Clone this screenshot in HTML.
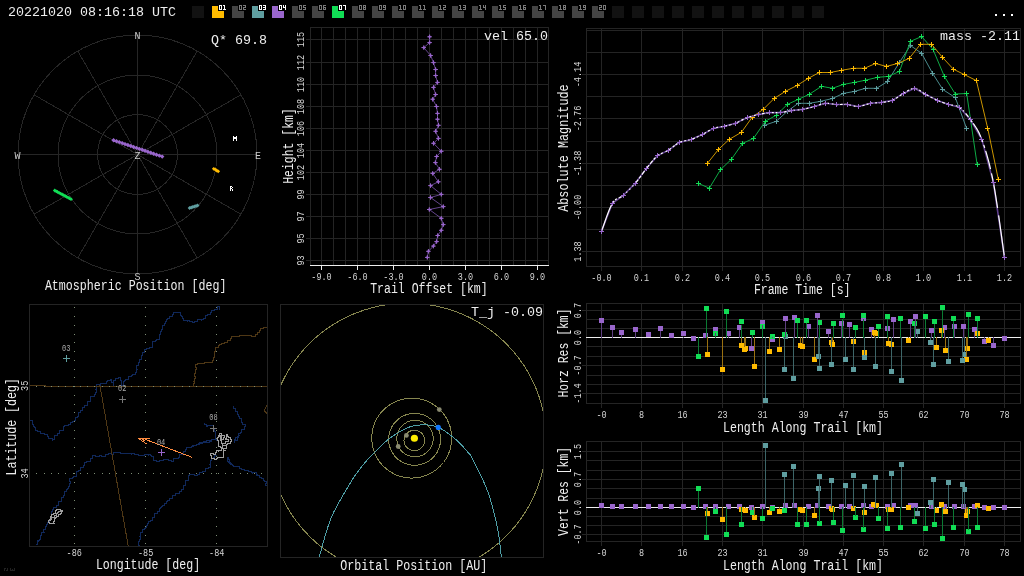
<!DOCTYPE html>
<html><head><meta charset="utf-8"><style>
html,body{margin:0;padding:0;background:#000;width:1024px;height:576px;overflow:hidden}
svg{display:block}
text{font-family:"Liberation Mono", monospace;}
</style></head><body>
<div style="will-change:transform;width:1024px;height:576px"><svg width="1024" height="576" viewBox="0 0 1024 576">
<rect width="1024" height="576" fill="#000"/>
<text x="8" y="15.5" font-size="13.33" fill="#eeeeee" text-anchor="start" >20221020 08:16:18 UTC</text>
<rect x="192" y="6" width="12" height="12" fill="#121212"/>
<rect x="212" y="6" width="12" height="12" fill="#ffbb00"/>
<rect x="218" y="4" width="9" height="7" fill="#000"/>
<path d="M219,5h1v1h-1zM220,5h1v1h-1zM221,5h1v1h-1zM219,6h1v1h-1zM221,6h1v1h-1zM219,7h1v1h-1zM221,7h1v1h-1zM219,8h1v1h-1zM221,8h1v1h-1zM219,9h1v1h-1zM220,9h1v1h-1zM221,9h1v1h-1zM223,5h1v1h-1zM224,5h1v1h-1zM224,6h1v1h-1zM224,7h1v1h-1zM224,8h1v1h-1zM223,9h1v1h-1zM224,9h1v1h-1zM225,9h1v1h-1z" fill="#fff"/>
<rect x="232" y="6" width="12" height="12" fill="#444"/>
<rect x="238" y="4" width="9" height="7" fill="#000"/>
<path d="M239,5h1v1h-1zM240,5h1v1h-1zM241,5h1v1h-1zM239,6h1v1h-1zM241,6h1v1h-1zM239,7h1v1h-1zM241,7h1v1h-1zM239,8h1v1h-1zM241,8h1v1h-1zM239,9h1v1h-1zM240,9h1v1h-1zM241,9h1v1h-1zM243,5h1v1h-1zM244,5h1v1h-1zM245,5h1v1h-1zM245,6h1v1h-1zM243,7h1v1h-1zM244,7h1v1h-1zM245,7h1v1h-1zM243,8h1v1h-1zM243,9h1v1h-1zM244,9h1v1h-1zM245,9h1v1h-1z" fill="#7a7a7a"/>
<rect x="252" y="6" width="12" height="12" fill="#5f9ea0"/>
<rect x="258" y="4" width="9" height="7" fill="#000"/>
<path d="M259,5h1v1h-1zM260,5h1v1h-1zM261,5h1v1h-1zM259,6h1v1h-1zM261,6h1v1h-1zM259,7h1v1h-1zM261,7h1v1h-1zM259,8h1v1h-1zM261,8h1v1h-1zM259,9h1v1h-1zM260,9h1v1h-1zM261,9h1v1h-1zM263,5h1v1h-1zM264,5h1v1h-1zM265,5h1v1h-1zM265,6h1v1h-1zM263,7h1v1h-1zM264,7h1v1h-1zM265,7h1v1h-1zM265,8h1v1h-1zM263,9h1v1h-1zM264,9h1v1h-1zM265,9h1v1h-1z" fill="#fff"/>
<rect x="272" y="6" width="12" height="12" fill="#9966cc"/>
<rect x="278" y="4" width="9" height="7" fill="#000"/>
<path d="M279,5h1v1h-1zM280,5h1v1h-1zM281,5h1v1h-1zM279,6h1v1h-1zM281,6h1v1h-1zM279,7h1v1h-1zM281,7h1v1h-1zM279,8h1v1h-1zM281,8h1v1h-1zM279,9h1v1h-1zM280,9h1v1h-1zM281,9h1v1h-1zM283,5h1v1h-1zM285,5h1v1h-1zM283,6h1v1h-1zM285,6h1v1h-1zM283,7h1v1h-1zM284,7h1v1h-1zM285,7h1v1h-1zM285,8h1v1h-1zM285,9h1v1h-1z" fill="#fff"/>
<rect x="292" y="6" width="12" height="12" fill="#444"/>
<rect x="298" y="4" width="9" height="7" fill="#000"/>
<path d="M299,5h1v1h-1zM300,5h1v1h-1zM301,5h1v1h-1zM299,6h1v1h-1zM301,6h1v1h-1zM299,7h1v1h-1zM301,7h1v1h-1zM299,8h1v1h-1zM301,8h1v1h-1zM299,9h1v1h-1zM300,9h1v1h-1zM301,9h1v1h-1zM303,5h1v1h-1zM304,5h1v1h-1zM305,5h1v1h-1zM303,6h1v1h-1zM303,7h1v1h-1zM304,7h1v1h-1zM305,7h1v1h-1zM305,8h1v1h-1zM303,9h1v1h-1zM304,9h1v1h-1zM305,9h1v1h-1z" fill="#7a7a7a"/>
<rect x="312" y="6" width="12" height="12" fill="#444"/>
<rect x="318" y="4" width="9" height="7" fill="#000"/>
<path d="M319,5h1v1h-1zM320,5h1v1h-1zM321,5h1v1h-1zM319,6h1v1h-1zM321,6h1v1h-1zM319,7h1v1h-1zM321,7h1v1h-1zM319,8h1v1h-1zM321,8h1v1h-1zM319,9h1v1h-1zM320,9h1v1h-1zM321,9h1v1h-1zM323,5h1v1h-1zM324,5h1v1h-1zM325,5h1v1h-1zM323,6h1v1h-1zM323,7h1v1h-1zM324,7h1v1h-1zM325,7h1v1h-1zM323,8h1v1h-1zM325,8h1v1h-1zM323,9h1v1h-1zM324,9h1v1h-1zM325,9h1v1h-1z" fill="#7a7a7a"/>
<rect x="332" y="6" width="12" height="12" fill="#11dd55"/>
<rect x="338" y="4" width="9" height="7" fill="#000"/>
<path d="M339,5h1v1h-1zM340,5h1v1h-1zM341,5h1v1h-1zM339,6h1v1h-1zM341,6h1v1h-1zM339,7h1v1h-1zM341,7h1v1h-1zM339,8h1v1h-1zM341,8h1v1h-1zM339,9h1v1h-1zM340,9h1v1h-1zM341,9h1v1h-1zM343,5h1v1h-1zM344,5h1v1h-1zM345,5h1v1h-1zM345,6h1v1h-1zM345,7h1v1h-1zM345,8h1v1h-1zM345,9h1v1h-1z" fill="#fff"/>
<rect x="352" y="6" width="12" height="12" fill="#444"/>
<rect x="358" y="4" width="9" height="7" fill="#000"/>
<path d="M359,5h1v1h-1zM360,5h1v1h-1zM361,5h1v1h-1zM359,6h1v1h-1zM361,6h1v1h-1zM359,7h1v1h-1zM361,7h1v1h-1zM359,8h1v1h-1zM361,8h1v1h-1zM359,9h1v1h-1zM360,9h1v1h-1zM361,9h1v1h-1zM363,5h1v1h-1zM364,5h1v1h-1zM365,5h1v1h-1zM363,6h1v1h-1zM365,6h1v1h-1zM363,7h1v1h-1zM364,7h1v1h-1zM365,7h1v1h-1zM363,8h1v1h-1zM365,8h1v1h-1zM363,9h1v1h-1zM364,9h1v1h-1zM365,9h1v1h-1z" fill="#7a7a7a"/>
<rect x="372" y="6" width="12" height="12" fill="#444"/>
<rect x="378" y="4" width="9" height="7" fill="#000"/>
<path d="M379,5h1v1h-1zM380,5h1v1h-1zM381,5h1v1h-1zM379,6h1v1h-1zM381,6h1v1h-1zM379,7h1v1h-1zM381,7h1v1h-1zM379,8h1v1h-1zM381,8h1v1h-1zM379,9h1v1h-1zM380,9h1v1h-1zM381,9h1v1h-1zM383,5h1v1h-1zM384,5h1v1h-1zM385,5h1v1h-1zM383,6h1v1h-1zM385,6h1v1h-1zM383,7h1v1h-1zM384,7h1v1h-1zM385,7h1v1h-1zM385,8h1v1h-1zM383,9h1v1h-1zM384,9h1v1h-1zM385,9h1v1h-1z" fill="#7a7a7a"/>
<rect x="392" y="6" width="12" height="12" fill="#444"/>
<rect x="398" y="4" width="9" height="7" fill="#000"/>
<path d="M399,5h1v1h-1zM400,5h1v1h-1zM400,6h1v1h-1zM400,7h1v1h-1zM400,8h1v1h-1zM399,9h1v1h-1zM400,9h1v1h-1zM401,9h1v1h-1zM403,5h1v1h-1zM404,5h1v1h-1zM405,5h1v1h-1zM403,6h1v1h-1zM405,6h1v1h-1zM403,7h1v1h-1zM405,7h1v1h-1zM403,8h1v1h-1zM405,8h1v1h-1zM403,9h1v1h-1zM404,9h1v1h-1zM405,9h1v1h-1z" fill="#7a7a7a"/>
<rect x="412" y="6" width="12" height="12" fill="#444"/>
<rect x="418" y="4" width="9" height="7" fill="#000"/>
<path d="M419,5h1v1h-1zM420,5h1v1h-1zM420,6h1v1h-1zM420,7h1v1h-1zM420,8h1v1h-1zM419,9h1v1h-1zM420,9h1v1h-1zM421,9h1v1h-1zM423,5h1v1h-1zM424,5h1v1h-1zM424,6h1v1h-1zM424,7h1v1h-1zM424,8h1v1h-1zM423,9h1v1h-1zM424,9h1v1h-1zM425,9h1v1h-1z" fill="#7a7a7a"/>
<rect x="432" y="6" width="12" height="12" fill="#444"/>
<rect x="438" y="4" width="9" height="7" fill="#000"/>
<path d="M439,5h1v1h-1zM440,5h1v1h-1zM440,6h1v1h-1zM440,7h1v1h-1zM440,8h1v1h-1zM439,9h1v1h-1zM440,9h1v1h-1zM441,9h1v1h-1zM443,5h1v1h-1zM444,5h1v1h-1zM445,5h1v1h-1zM445,6h1v1h-1zM443,7h1v1h-1zM444,7h1v1h-1zM445,7h1v1h-1zM443,8h1v1h-1zM443,9h1v1h-1zM444,9h1v1h-1zM445,9h1v1h-1z" fill="#7a7a7a"/>
<rect x="452" y="6" width="12" height="12" fill="#444"/>
<rect x="458" y="4" width="9" height="7" fill="#000"/>
<path d="M459,5h1v1h-1zM460,5h1v1h-1zM460,6h1v1h-1zM460,7h1v1h-1zM460,8h1v1h-1zM459,9h1v1h-1zM460,9h1v1h-1zM461,9h1v1h-1zM463,5h1v1h-1zM464,5h1v1h-1zM465,5h1v1h-1zM465,6h1v1h-1zM463,7h1v1h-1zM464,7h1v1h-1zM465,7h1v1h-1zM465,8h1v1h-1zM463,9h1v1h-1zM464,9h1v1h-1zM465,9h1v1h-1z" fill="#7a7a7a"/>
<rect x="472" y="6" width="12" height="12" fill="#444"/>
<rect x="478" y="4" width="9" height="7" fill="#000"/>
<path d="M479,5h1v1h-1zM480,5h1v1h-1zM480,6h1v1h-1zM480,7h1v1h-1zM480,8h1v1h-1zM479,9h1v1h-1zM480,9h1v1h-1zM481,9h1v1h-1zM483,5h1v1h-1zM485,5h1v1h-1zM483,6h1v1h-1zM485,6h1v1h-1zM483,7h1v1h-1zM484,7h1v1h-1zM485,7h1v1h-1zM485,8h1v1h-1zM485,9h1v1h-1z" fill="#7a7a7a"/>
<rect x="492" y="6" width="12" height="12" fill="#444"/>
<rect x="498" y="4" width="9" height="7" fill="#000"/>
<path d="M499,5h1v1h-1zM500,5h1v1h-1zM500,6h1v1h-1zM500,7h1v1h-1zM500,8h1v1h-1zM499,9h1v1h-1zM500,9h1v1h-1zM501,9h1v1h-1zM503,5h1v1h-1zM504,5h1v1h-1zM505,5h1v1h-1zM503,6h1v1h-1zM503,7h1v1h-1zM504,7h1v1h-1zM505,7h1v1h-1zM505,8h1v1h-1zM503,9h1v1h-1zM504,9h1v1h-1zM505,9h1v1h-1z" fill="#7a7a7a"/>
<rect x="512" y="6" width="12" height="12" fill="#444"/>
<rect x="518" y="4" width="9" height="7" fill="#000"/>
<path d="M519,5h1v1h-1zM520,5h1v1h-1zM520,6h1v1h-1zM520,7h1v1h-1zM520,8h1v1h-1zM519,9h1v1h-1zM520,9h1v1h-1zM521,9h1v1h-1zM523,5h1v1h-1zM524,5h1v1h-1zM525,5h1v1h-1zM523,6h1v1h-1zM523,7h1v1h-1zM524,7h1v1h-1zM525,7h1v1h-1zM523,8h1v1h-1zM525,8h1v1h-1zM523,9h1v1h-1zM524,9h1v1h-1zM525,9h1v1h-1z" fill="#7a7a7a"/>
<rect x="532" y="6" width="12" height="12" fill="#444"/>
<rect x="538" y="4" width="9" height="7" fill="#000"/>
<path d="M539,5h1v1h-1zM540,5h1v1h-1zM540,6h1v1h-1zM540,7h1v1h-1zM540,8h1v1h-1zM539,9h1v1h-1zM540,9h1v1h-1zM541,9h1v1h-1zM543,5h1v1h-1zM544,5h1v1h-1zM545,5h1v1h-1zM545,6h1v1h-1zM545,7h1v1h-1zM545,8h1v1h-1zM545,9h1v1h-1z" fill="#7a7a7a"/>
<rect x="552" y="6" width="12" height="12" fill="#444"/>
<rect x="558" y="4" width="9" height="7" fill="#000"/>
<path d="M559,5h1v1h-1zM560,5h1v1h-1zM560,6h1v1h-1zM560,7h1v1h-1zM560,8h1v1h-1zM559,9h1v1h-1zM560,9h1v1h-1zM561,9h1v1h-1zM563,5h1v1h-1zM564,5h1v1h-1zM565,5h1v1h-1zM563,6h1v1h-1zM565,6h1v1h-1zM563,7h1v1h-1zM564,7h1v1h-1zM565,7h1v1h-1zM563,8h1v1h-1zM565,8h1v1h-1zM563,9h1v1h-1zM564,9h1v1h-1zM565,9h1v1h-1z" fill="#7a7a7a"/>
<rect x="572" y="6" width="12" height="12" fill="#444"/>
<rect x="578" y="4" width="9" height="7" fill="#000"/>
<path d="M579,5h1v1h-1zM580,5h1v1h-1zM580,6h1v1h-1zM580,7h1v1h-1zM580,8h1v1h-1zM579,9h1v1h-1zM580,9h1v1h-1zM581,9h1v1h-1zM583,5h1v1h-1zM584,5h1v1h-1zM585,5h1v1h-1zM583,6h1v1h-1zM585,6h1v1h-1zM583,7h1v1h-1zM584,7h1v1h-1zM585,7h1v1h-1zM585,8h1v1h-1zM583,9h1v1h-1zM584,9h1v1h-1zM585,9h1v1h-1z" fill="#7a7a7a"/>
<rect x="592" y="6" width="12" height="12" fill="#444"/>
<rect x="598" y="4" width="9" height="7" fill="#000"/>
<path d="M599,5h1v1h-1zM600,5h1v1h-1zM601,5h1v1h-1zM601,6h1v1h-1zM599,7h1v1h-1zM600,7h1v1h-1zM601,7h1v1h-1zM599,8h1v1h-1zM599,9h1v1h-1zM600,9h1v1h-1zM601,9h1v1h-1zM603,5h1v1h-1zM604,5h1v1h-1zM605,5h1v1h-1zM603,6h1v1h-1zM605,6h1v1h-1zM603,7h1v1h-1zM605,7h1v1h-1zM603,8h1v1h-1zM605,8h1v1h-1zM603,9h1v1h-1zM604,9h1v1h-1zM605,9h1v1h-1z" fill="#7a7a7a"/>
<rect x="612" y="6" width="12" height="12" fill="#121212"/>
<rect x="632" y="6" width="12" height="12" fill="#121212"/>
<rect x="652" y="6" width="12" height="12" fill="#121212"/>
<rect x="672" y="6" width="12" height="12" fill="#121212"/>
<rect x="692" y="6" width="12" height="12" fill="#121212"/>
<rect x="712" y="6" width="12" height="12" fill="#121212"/>
<rect x="732" y="6" width="12" height="12" fill="#121212"/>
<rect x="752" y="6" width="12" height="12" fill="#121212"/>
<rect x="772" y="6" width="12" height="12" fill="#121212"/>
<rect x="792" y="6" width="12" height="12" fill="#121212"/>
<rect x="812" y="6" width="12" height="12" fill="#121212"/>
<path d="M4,568h2v1h-1v2h-1zM7,568h1v3h-2v-1h1zM10,568h1v2h1v-1h1v1h1v-2h1v3h-5z" fill="#222"/>
<rect x="995" y="14" width="2" height="2" fill="#fff"/>
<rect x="1003" y="14" width="2" height="2" fill="#fff"/>
<rect x="1011" y="14" width="2" height="2" fill="#fff"/>
<circle cx="137.5" cy="154.5" r="40" fill="none" stroke="#262626" stroke-width="1" shape-rendering="crispEdges"/>
<circle cx="137.5" cy="154.5" r="79.5" fill="none" stroke="#262626" stroke-width="1" shape-rendering="crispEdges"/>
<circle cx="137.5" cy="154.5" r="119.5" fill="none" stroke="#262626" stroke-width="1" shape-rendering="crispEdges"/>
<line x1="137.5" y1="154.5" x2="257.0" y2="154.5" stroke="#262626" stroke-width="1" shape-rendering="crispEdges"/>
<line x1="137.5" y1="154.5" x2="240.99003575224043" y2="214.25" stroke="#262626" stroke-width="1" shape-rendering="crispEdges"/>
<line x1="137.5" y1="154.5" x2="197.25" y2="257.99003575224043" stroke="#262626" stroke-width="1" shape-rendering="crispEdges"/>
<line x1="137.5" y1="154.5" x2="137.5" y2="274.0" stroke="#262626" stroke-width="1" shape-rendering="crispEdges"/>
<line x1="137.5" y1="154.5" x2="77.75000000000003" y2="257.99003575224043" stroke="#262626" stroke-width="1" shape-rendering="crispEdges"/>
<line x1="137.5" y1="154.5" x2="34.00996424775957" y2="214.25" stroke="#262626" stroke-width="1" shape-rendering="crispEdges"/>
<line x1="137.5" y1="154.5" x2="18.0" y2="154.50000000000003" stroke="#262626" stroke-width="1" shape-rendering="crispEdges"/>
<line x1="137.5" y1="154.5" x2="34.009964247759584" y2="94.74999999999999" stroke="#262626" stroke-width="1" shape-rendering="crispEdges"/>
<line x1="137.5" y1="154.5" x2="77.74999999999994" y2="51.00996424775961" stroke="#262626" stroke-width="1" shape-rendering="crispEdges"/>
<line x1="137.5" y1="154.5" x2="137.49999999999997" y2="35.0" stroke="#262626" stroke-width="1" shape-rendering="crispEdges"/>
<line x1="137.5" y1="154.5" x2="197.25" y2="51.009964247759584" stroke="#262626" stroke-width="1" shape-rendering="crispEdges"/>
<line x1="137.5" y1="154.5" x2="240.99003575224037" y2="94.74999999999994" stroke="#262626" stroke-width="1" shape-rendering="crispEdges"/>
<text x="137.5" y="39" font-size="10" fill="#cccccc" text-anchor="middle" >N</text>
<text x="137.5" y="279.5" font-size="10" fill="#cccccc" text-anchor="middle" >S</text>
<text x="17.5" y="159" font-size="10" fill="#cccccc" text-anchor="middle" >W</text>
<text x="258" y="159" font-size="10" fill="#cccccc" text-anchor="middle" >E</text>
<text x="137.5" y="159" font-size="10" fill="#cccccc" text-anchor="middle" >Z</text>
<path d="M233,136h1v1h-1zM236,136h1v1h-1zM233,137h1v1h-1zM234,137h1v1h-1zM235,137h1v1h-1zM236,137h1v1h-1zM233,138h1v1h-1zM234,138h1v1h-1zM235,138h1v1h-1zM236,138h1v1h-1zM233,139h1v1h-1zM236,139h1v1h-1zM233,140h1v1h-1zM236,140h1v1h-1z" fill="#ffffff"/>
<path d="M230,186h1v1h-1zM231,186h1v1h-1zM230,187h1v1h-1zM232,187h1v1h-1zM230,188h1v1h-1zM231,188h1v1h-1zM230,189h1v1h-1zM232,189h1v1h-1zM230,190h1v1h-1zM232,190h1v1h-1z" fill="#ffffff"/>
<text x="267" y="44" font-size="13.33" fill="#eeeeee" text-anchor="end" >Q* 69.8</text>
<text x="135.65" y="290.1" font-size="14" fill="#eeeeee" text-anchor="middle" textLength="181.5" lengthAdjust="spacingAndGlyphs" >Atmospheric Position [deg]</text>
<path d="M113.6,138.0l2.2,2.2l-2.2,2.2l-2.2,-2.2zM116.5,139.0l2.2,2.2l-2.2,2.2l-2.2,-2.2zM119.3,139.9l2.2,2.2l-2.2,2.2l-2.2,-2.2zM122.2,140.9l2.2,2.2l-2.2,2.2l-2.2,-2.2zM125.0,141.9l2.2,2.2l-2.2,2.2l-2.2,-2.2zM127.9,142.8l2.2,2.2l-2.2,2.2l-2.2,-2.2zM130.8,143.8l2.2,2.2l-2.2,2.2l-2.2,-2.2zM133.6,144.8l2.2,2.2l-2.2,2.2l-2.2,-2.2zM136.5,145.7l2.2,2.2l-2.2,2.2l-2.2,-2.2zM139.3,146.7l2.2,2.2l-2.2,2.2l-2.2,-2.2zM142.2,147.6l2.2,2.2l-2.2,2.2l-2.2,-2.2zM145.0,148.6l2.2,2.2l-2.2,2.2l-2.2,-2.2zM147.9,149.6l2.2,2.2l-2.2,2.2l-2.2,-2.2zM150.8,150.5l2.2,2.2l-2.2,2.2l-2.2,-2.2zM153.6,151.5l2.2,2.2l-2.2,2.2l-2.2,-2.2zM156.5,152.5l2.2,2.2l-2.2,2.2l-2.2,-2.2zM159.3,153.4l2.2,2.2l-2.2,2.2l-2.2,-2.2zM162.2,154.4l2.2,2.2l-2.2,2.2l-2.2,-2.2z" fill="#9966cc"/>
<path d="M54.8,188.6l1.9,1.9l-1.9,1.9l-1.9,-1.9zM56.3,189.4l1.9,1.9l-1.9,1.9l-1.9,-1.9zM57.7,190.2l1.9,1.9l-1.9,1.9l-1.9,-1.9zM59.2,191.0l1.9,1.9l-1.9,1.9l-1.9,-1.9zM60.7,191.8l1.9,1.9l-1.9,1.9l-1.9,-1.9zM62.2,192.6l1.9,1.9l-1.9,1.9l-1.9,-1.9zM63.6,193.3l1.9,1.9l-1.9,1.9l-1.9,-1.9zM65.1,194.1l1.9,1.9l-1.9,1.9l-1.9,-1.9zM66.6,194.9l1.9,1.9l-1.9,1.9l-1.9,-1.9zM68.1,195.7l1.9,1.9l-1.9,1.9l-1.9,-1.9zM69.5,196.5l1.9,1.9l-1.9,1.9l-1.9,-1.9zM71.0,197.3l1.9,1.9l-1.9,1.9l-1.9,-1.9z" fill="#11dd55"/>
<path d="M213.8,166.9l1.9,1.9l-1.9,1.9l-1.9,-1.9zM215.3,167.7l1.9,1.9l-1.9,1.9l-1.9,-1.9zM216.7,168.6l1.9,1.9l-1.9,1.9l-1.9,-1.9zM218.2,169.4l1.9,1.9l-1.9,1.9l-1.9,-1.9z" fill="#ffbb00"/>
<path d="M189.6,206.1l1.9,1.9l-1.9,1.9l-1.9,-1.9zM191.2,205.6l1.9,1.9l-1.9,1.9l-1.9,-1.9zM192.8,205.1l1.9,1.9l-1.9,1.9l-1.9,-1.9zM194.4,204.6l1.9,1.9l-1.9,1.9l-1.9,-1.9zM196.0,204.1l1.9,1.9l-1.9,1.9l-1.9,-1.9zM197.6,203.6l1.9,1.9l-1.9,1.9l-1.9,-1.9z" fill="#5f9ea0"/>
<rect x="321" y="27" width="1" height="238" fill="#242424"/>
<rect x="333" y="27" width="1" height="238" fill="#242424"/>
<rect x="345" y="27" width="1" height="238" fill="#242424"/>
<rect x="357" y="27" width="1" height="238" fill="#242424"/>
<rect x="369" y="27" width="1" height="238" fill="#242424"/>
<rect x="381" y="27" width="1" height="238" fill="#242424"/>
<rect x="393" y="27" width="1" height="238" fill="#242424"/>
<rect x="405" y="27" width="1" height="238" fill="#242424"/>
<rect x="417" y="27" width="1" height="238" fill="#242424"/>
<rect x="429" y="27" width="1" height="238" fill="#242424"/>
<rect x="441" y="27" width="1" height="238" fill="#242424"/>
<rect x="453" y="27" width="1" height="238" fill="#242424"/>
<rect x="465" y="27" width="1" height="238" fill="#242424"/>
<rect x="477" y="27" width="1" height="238" fill="#242424"/>
<rect x="489" y="27" width="1" height="238" fill="#242424"/>
<rect x="501" y="27" width="1" height="238" fill="#242424"/>
<rect x="513" y="27" width="1" height="238" fill="#242424"/>
<rect x="525" y="27" width="1" height="238" fill="#242424"/>
<rect x="537" y="27" width="1" height="238" fill="#242424"/>
<rect x="306" y="39" width="243" height="1" fill="#242424"/>
<rect x="306" y="62" width="243" height="1" fill="#242424"/>
<rect x="306" y="84" width="243" height="1" fill="#242424"/>
<rect x="306" y="106" width="243" height="1" fill="#242424"/>
<rect x="306" y="128" width="243" height="1" fill="#242424"/>
<rect x="306" y="150" width="243" height="1" fill="#242424"/>
<rect x="306" y="172" width="243" height="1" fill="#242424"/>
<rect x="306" y="194" width="243" height="1" fill="#242424"/>
<rect x="306" y="216" width="243" height="1" fill="#242424"/>
<rect x="306" y="238" width="243" height="1" fill="#242424"/>
<rect x="306" y="260" width="243" height="1" fill="#242424"/>
<rect x="310" y="27" width="239" height="1" fill="#242424"/>
<rect x="310" y="265" width="239" height="1" fill="#242424"/>
<rect x="310" y="27" width="1" height="239" fill="#242424"/>
<rect x="548" y="27" width="1" height="239" fill="#242424"/>
<rect x="310" y="265" width="239" height="1" fill="#eeeeee"/>
<rect x="321" y="266" width="1" height="4" fill="#eeeeee"/>
<text x="321.5" y="280" font-size="10.5" fill="#d4d4d4" text-anchor="middle" textLength="20.4" lengthAdjust="spacingAndGlyphs" >-9.0</text>
<rect x="357" y="266" width="1" height="4" fill="#eeeeee"/>
<text x="357.5" y="280" font-size="10.5" fill="#d4d4d4" text-anchor="middle" textLength="20.4" lengthAdjust="spacingAndGlyphs" >-6.0</text>
<rect x="393" y="266" width="1" height="4" fill="#eeeeee"/>
<text x="393.5" y="280" font-size="10.5" fill="#d4d4d4" text-anchor="middle" textLength="20.4" lengthAdjust="spacingAndGlyphs" >-3.0</text>
<rect x="429" y="266" width="1" height="4" fill="#eeeeee"/>
<text x="429.5" y="280" font-size="10.5" fill="#d4d4d4" text-anchor="middle" textLength="15.299999999999999" lengthAdjust="spacingAndGlyphs" >0.0</text>
<rect x="465" y="266" width="1" height="4" fill="#eeeeee"/>
<text x="465.5" y="280" font-size="10.5" fill="#d4d4d4" text-anchor="middle" textLength="15.299999999999999" lengthAdjust="spacingAndGlyphs" >3.0</text>
<rect x="501" y="266" width="1" height="4" fill="#eeeeee"/>
<text x="501.5" y="280" font-size="10.5" fill="#d4d4d4" text-anchor="middle" textLength="15.299999999999999" lengthAdjust="spacingAndGlyphs" >6.0</text>
<rect x="537" y="266" width="1" height="4" fill="#eeeeee"/>
<text x="537.5" y="280" font-size="10.5" fill="#d4d4d4" text-anchor="middle" textLength="15.299999999999999" lengthAdjust="spacingAndGlyphs" >9.0</text>
<text x="0" y="0" font-size="10.5" fill="#d4d4d4" text-anchor="middle" transform="translate(304.2,39.5) rotate(-90)" textLength="15.299999999999999" lengthAdjust="spacingAndGlyphs" >115</text>
<text x="0" y="0" font-size="10.5" fill="#d4d4d4" text-anchor="middle" transform="translate(304.2,62.5) rotate(-90)" textLength="15.299999999999999" lengthAdjust="spacingAndGlyphs" >112</text>
<text x="0" y="0" font-size="10.5" fill="#d4d4d4" text-anchor="middle" transform="translate(304.2,84.5) rotate(-90)" textLength="15.299999999999999" lengthAdjust="spacingAndGlyphs" >110</text>
<text x="0" y="0" font-size="10.5" fill="#d4d4d4" text-anchor="middle" transform="translate(304.2,106.5) rotate(-90)" textLength="15.299999999999999" lengthAdjust="spacingAndGlyphs" >108</text>
<text x="0" y="0" font-size="10.5" fill="#d4d4d4" text-anchor="middle" transform="translate(304.2,128.5) rotate(-90)" textLength="15.299999999999999" lengthAdjust="spacingAndGlyphs" >106</text>
<text x="0" y="0" font-size="10.5" fill="#d4d4d4" text-anchor="middle" transform="translate(304.2,150.5) rotate(-90)" textLength="15.299999999999999" lengthAdjust="spacingAndGlyphs" >104</text>
<text x="0" y="0" font-size="10.5" fill="#d4d4d4" text-anchor="middle" transform="translate(304.2,172.5) rotate(-90)" textLength="15.299999999999999" lengthAdjust="spacingAndGlyphs" >102</text>
<text x="0" y="0" font-size="10.5" fill="#d4d4d4" text-anchor="middle" transform="translate(304.2,194.5) rotate(-90)" textLength="10.2" lengthAdjust="spacingAndGlyphs" >99</text>
<text x="0" y="0" font-size="10.5" fill="#d4d4d4" text-anchor="middle" transform="translate(304.2,216.5) rotate(-90)" textLength="10.2" lengthAdjust="spacingAndGlyphs" >97</text>
<text x="0" y="0" font-size="10.5" fill="#d4d4d4" text-anchor="middle" transform="translate(304.2,238.5) rotate(-90)" textLength="10.2" lengthAdjust="spacingAndGlyphs" >95</text>
<text x="0" y="0" font-size="10.5" fill="#d4d4d4" text-anchor="middle" transform="translate(304.2,260.5) rotate(-90)" textLength="10.2" lengthAdjust="spacingAndGlyphs" >93</text>
<text x="428.95" y="293" font-size="14" fill="#eeeeee" text-anchor="middle" textLength="117.5" lengthAdjust="spacingAndGlyphs" >Trail Offset [km]</text>
<text x="0" y="0" font-size="14" fill="#eeeeee" text-anchor="middle" transform="translate(293.3,146) rotate(-90)" textLength="75.6" lengthAdjust="spacingAndGlyphs" >Height [km]</text>
<text x="548" y="39.6" font-size="13.33" fill="#eeeeee" text-anchor="end" >vel 65.0</text>
<polyline points="429.6,36.8 429.6,42.6 423.8,47.6 430.6,55.5 433.5,62.6 435.6,69.5 435.6,75.5 437.5,82.4 433.5,87.4 435.6,94.5 432.7,99.2 436.5,106.5 437.5,113.4 437.5,119.2 438.5,125.3 435.6,131.3 438.5,138.4 433.5,143.3 441.3,151.3 436.6,156.5 435.4,162.6 439.5,169.3 432.7,173.4 438.4,181.8 430.5,185.6 441.3,194.4 430.5,197.5 443.3,206.6 429.3,209.5 441.3,218.3 443.3,224.6 441.3,230.3 437.7,235.5 436.6,241.6 433.4,246.1 428.4,251.3 427.3,257.4" fill="none" stroke="#6e4c9a" stroke-width="0.9" stroke-linejoin="round" />
<path d="M427.3,36.8h4.6M429.6,34.5v4.6" stroke="#9966cc" stroke-width="1"/>
<path d="M429.6,35.1l1.6,1.6l-1.6,1.6l-1.6,-1.6z" fill="#9966cc"/>
<path d="M427.3,42.6h4.6M429.6,40.3v4.6" stroke="#9966cc" stroke-width="1"/>
<path d="M429.6,41.0l1.6,1.6l-1.6,1.6l-1.6,-1.6z" fill="#9966cc"/>
<path d="M421.4,47.6h4.6M423.8,45.3v4.6" stroke="#9966cc" stroke-width="1"/>
<path d="M423.8,46.0l1.6,1.6l-1.6,1.6l-1.6,-1.6z" fill="#9966cc"/>
<path d="M428.3,55.5h4.6M430.6,53.2v4.6" stroke="#9966cc" stroke-width="1"/>
<path d="M430.6,53.9l1.6,1.6l-1.6,1.6l-1.6,-1.6z" fill="#9966cc"/>
<path d="M431.2,62.6h4.6M433.5,60.3v4.6" stroke="#9966cc" stroke-width="1"/>
<path d="M433.5,61.0l1.6,1.6l-1.6,1.6l-1.6,-1.6z" fill="#9966cc"/>
<path d="M433.3,69.5h4.6M435.6,67.2v4.6" stroke="#9966cc" stroke-width="1"/>
<path d="M435.6,67.9l1.6,1.6l-1.6,1.6l-1.6,-1.6z" fill="#9966cc"/>
<path d="M433.3,75.5h4.6M435.6,73.2v4.6" stroke="#9966cc" stroke-width="1"/>
<path d="M435.6,73.9l1.6,1.6l-1.6,1.6l-1.6,-1.6z" fill="#9966cc"/>
<path d="M435.2,82.4h4.6M437.5,80.1v4.6" stroke="#9966cc" stroke-width="1"/>
<path d="M437.5,80.8l1.6,1.6l-1.6,1.6l-1.6,-1.6z" fill="#9966cc"/>
<path d="M431.2,87.4h4.6M433.5,85.1v4.6" stroke="#9966cc" stroke-width="1"/>
<path d="M433.5,85.8l1.6,1.6l-1.6,1.6l-1.6,-1.6z" fill="#9966cc"/>
<path d="M433.3,94.5h4.6M435.6,92.2v4.6" stroke="#9966cc" stroke-width="1"/>
<path d="M435.6,92.9l1.6,1.6l-1.6,1.6l-1.6,-1.6z" fill="#9966cc"/>
<path d="M430.4,99.2h4.6M432.7,97.0v4.6" stroke="#9966cc" stroke-width="1"/>
<path d="M432.7,97.7l1.6,1.6l-1.6,1.6l-1.6,-1.6z" fill="#9966cc"/>
<path d="M434.2,106.5h4.6M436.5,104.2v4.6" stroke="#9966cc" stroke-width="1"/>
<path d="M436.5,104.9l1.6,1.6l-1.6,1.6l-1.6,-1.6z" fill="#9966cc"/>
<path d="M435.2,113.4h4.6M437.5,111.1v4.6" stroke="#9966cc" stroke-width="1"/>
<path d="M437.5,111.8l1.6,1.6l-1.6,1.6l-1.6,-1.6z" fill="#9966cc"/>
<path d="M435.2,119.2h4.6M437.5,117.0v4.6" stroke="#9966cc" stroke-width="1"/>
<path d="M437.5,117.7l1.6,1.6l-1.6,1.6l-1.6,-1.6z" fill="#9966cc"/>
<path d="M436.2,125.3h4.6M438.5,123.0v4.6" stroke="#9966cc" stroke-width="1"/>
<path d="M438.5,123.7l1.6,1.6l-1.6,1.6l-1.6,-1.6z" fill="#9966cc"/>
<path d="M433.3,131.3h4.6M435.6,129.0v4.6" stroke="#9966cc" stroke-width="1"/>
<path d="M435.6,129.7l1.6,1.6l-1.6,1.6l-1.6,-1.6z" fill="#9966cc"/>
<path d="M436.2,138.4h4.6M438.5,136.1v4.6" stroke="#9966cc" stroke-width="1"/>
<path d="M438.5,136.8l1.6,1.6l-1.6,1.6l-1.6,-1.6z" fill="#9966cc"/>
<path d="M431.2,143.3h4.6M433.5,141.0v4.6" stroke="#9966cc" stroke-width="1"/>
<path d="M433.5,141.7l1.6,1.6l-1.6,1.6l-1.6,-1.6z" fill="#9966cc"/>
<path d="M439.0,151.3h4.6M441.3,149.0v4.6" stroke="#9966cc" stroke-width="1"/>
<path d="M441.3,149.7l1.6,1.6l-1.6,1.6l-1.6,-1.6z" fill="#9966cc"/>
<path d="M434.3,156.5h4.6M436.6,154.2v4.6" stroke="#9966cc" stroke-width="1"/>
<path d="M436.6,154.9l1.6,1.6l-1.6,1.6l-1.6,-1.6z" fill="#9966cc"/>
<path d="M433.1,162.6h4.6M435.4,160.3v4.6" stroke="#9966cc" stroke-width="1"/>
<path d="M435.4,161.0l1.6,1.6l-1.6,1.6l-1.6,-1.6z" fill="#9966cc"/>
<path d="M437.2,169.3h4.6M439.5,167.0v4.6" stroke="#9966cc" stroke-width="1"/>
<path d="M439.5,167.7l1.6,1.6l-1.6,1.6l-1.6,-1.6z" fill="#9966cc"/>
<path d="M430.4,173.4h4.6M432.7,171.1v4.6" stroke="#9966cc" stroke-width="1"/>
<path d="M432.7,171.8l1.6,1.6l-1.6,1.6l-1.6,-1.6z" fill="#9966cc"/>
<path d="M436.1,181.8h4.6M438.4,179.4v4.6" stroke="#9966cc" stroke-width="1"/>
<path d="M438.4,180.2l1.6,1.6l-1.6,1.6l-1.6,-1.6z" fill="#9966cc"/>
<path d="M428.2,185.6h4.6M430.5,183.3v4.6" stroke="#9966cc" stroke-width="1"/>
<path d="M430.5,184.0l1.6,1.6l-1.6,1.6l-1.6,-1.6z" fill="#9966cc"/>
<path d="M439.0,194.4h4.6M441.3,192.1v4.6" stroke="#9966cc" stroke-width="1"/>
<path d="M441.3,192.8l1.6,1.6l-1.6,1.6l-1.6,-1.6z" fill="#9966cc"/>
<path d="M428.2,197.5h4.6M430.5,195.2v4.6" stroke="#9966cc" stroke-width="1"/>
<path d="M430.5,195.9l1.6,1.6l-1.6,1.6l-1.6,-1.6z" fill="#9966cc"/>
<path d="M441.0,206.6h4.6M443.3,204.3v4.6" stroke="#9966cc" stroke-width="1"/>
<path d="M443.3,205.0l1.6,1.6l-1.6,1.6l-1.6,-1.6z" fill="#9966cc"/>
<path d="M427.0,209.5h4.6M429.3,207.2v4.6" stroke="#9966cc" stroke-width="1"/>
<path d="M429.3,207.9l1.6,1.6l-1.6,1.6l-1.6,-1.6z" fill="#9966cc"/>
<path d="M439.0,218.3h4.6M441.3,216.0v4.6" stroke="#9966cc" stroke-width="1"/>
<path d="M441.3,216.7l1.6,1.6l-1.6,1.6l-1.6,-1.6z" fill="#9966cc"/>
<path d="M441.0,224.6h4.6M443.3,222.3v4.6" stroke="#9966cc" stroke-width="1"/>
<path d="M443.3,223.0l1.6,1.6l-1.6,1.6l-1.6,-1.6z" fill="#9966cc"/>
<path d="M439.0,230.3h4.6M441.3,228.0v4.6" stroke="#9966cc" stroke-width="1"/>
<path d="M441.3,228.7l1.6,1.6l-1.6,1.6l-1.6,-1.6z" fill="#9966cc"/>
<path d="M435.4,235.5h4.6M437.7,233.2v4.6" stroke="#9966cc" stroke-width="1"/>
<path d="M437.7,233.9l1.6,1.6l-1.6,1.6l-1.6,-1.6z" fill="#9966cc"/>
<path d="M434.3,241.6h4.6M436.6,239.3v4.6" stroke="#9966cc" stroke-width="1"/>
<path d="M436.6,240.0l1.6,1.6l-1.6,1.6l-1.6,-1.6z" fill="#9966cc"/>
<path d="M431.1,246.1h4.6M433.4,243.8v4.6" stroke="#9966cc" stroke-width="1"/>
<path d="M433.4,244.5l1.6,1.6l-1.6,1.6l-1.6,-1.6z" fill="#9966cc"/>
<path d="M426.1,251.3h4.6M428.4,249.0v4.6" stroke="#9966cc" stroke-width="1"/>
<path d="M428.4,249.7l1.6,1.6l-1.6,1.6l-1.6,-1.6z" fill="#9966cc"/>
<path d="M425.0,257.4h4.6M427.3,255.1v4.6" stroke="#9966cc" stroke-width="1"/>
<path d="M427.3,255.8l1.6,1.6l-1.6,1.6l-1.6,-1.6z" fill="#9966cc"/>
<rect x="601" y="28" width="1" height="243" fill="#242424"/>
<rect x="641" y="28" width="1" height="243" fill="#242424"/>
<rect x="682" y="28" width="1" height="243" fill="#242424"/>
<rect x="722" y="28" width="1" height="243" fill="#242424"/>
<rect x="762" y="28" width="1" height="243" fill="#242424"/>
<rect x="803" y="28" width="1" height="243" fill="#242424"/>
<rect x="843" y="28" width="1" height="243" fill="#242424"/>
<rect x="883" y="28" width="1" height="243" fill="#242424"/>
<rect x="923" y="28" width="1" height="243" fill="#242424"/>
<rect x="964" y="28" width="1" height="243" fill="#242424"/>
<rect x="1004" y="28" width="1" height="243" fill="#242424"/>
<rect x="586" y="30" width="435" height="1" fill="#242424"/>
<rect x="586" y="52" width="435" height="1" fill="#242424"/>
<rect x="582" y="74" width="439" height="1" fill="#242424"/>
<rect x="586" y="96" width="435" height="1" fill="#242424"/>
<rect x="582" y="118" width="439" height="1" fill="#242424"/>
<rect x="586" y="141" width="435" height="1" fill="#242424"/>
<rect x="582" y="163" width="439" height="1" fill="#242424"/>
<rect x="586" y="185" width="435" height="1" fill="#242424"/>
<rect x="582" y="207" width="439" height="1" fill="#242424"/>
<rect x="586" y="229" width="435" height="1" fill="#242424"/>
<rect x="582" y="251" width="439" height="1" fill="#242424"/>
<rect x="586" y="28" width="435" height="1" fill="#242424"/>
<rect x="586" y="266" width="435" height="1" fill="#242424"/>
<rect x="586" y="28" width="1" height="239" fill="#242424"/>
<rect x="1020" y="28" width="1" height="239" fill="#242424"/>
<text x="601.5" y="281" font-size="10.5" fill="#d4d4d4" text-anchor="middle" textLength="20.4" lengthAdjust="spacingAndGlyphs" >-0.0</text>
<text x="641.5" y="281" font-size="10.5" fill="#d4d4d4" text-anchor="middle" textLength="15.299999999999999" lengthAdjust="spacingAndGlyphs" >0.1</text>
<text x="682.5" y="281" font-size="10.5" fill="#d4d4d4" text-anchor="middle" textLength="15.299999999999999" lengthAdjust="spacingAndGlyphs" >0.2</text>
<text x="722.5" y="281" font-size="10.5" fill="#d4d4d4" text-anchor="middle" textLength="15.299999999999999" lengthAdjust="spacingAndGlyphs" >0.4</text>
<text x="762.5" y="281" font-size="10.5" fill="#d4d4d4" text-anchor="middle" textLength="15.299999999999999" lengthAdjust="spacingAndGlyphs" >0.5</text>
<text x="803.5" y="281" font-size="10.5" fill="#d4d4d4" text-anchor="middle" textLength="15.299999999999999" lengthAdjust="spacingAndGlyphs" >0.6</text>
<text x="843.5" y="281" font-size="10.5" fill="#d4d4d4" text-anchor="middle" textLength="15.299999999999999" lengthAdjust="spacingAndGlyphs" >0.7</text>
<text x="883.5" y="281" font-size="10.5" fill="#d4d4d4" text-anchor="middle" textLength="15.299999999999999" lengthAdjust="spacingAndGlyphs" >0.8</text>
<text x="923.5" y="281" font-size="10.5" fill="#d4d4d4" text-anchor="middle" textLength="15.299999999999999" lengthAdjust="spacingAndGlyphs" >1.0</text>
<text x="964.5" y="281" font-size="10.5" fill="#d4d4d4" text-anchor="middle" textLength="15.299999999999999" lengthAdjust="spacingAndGlyphs" >1.1</text>
<text x="1004.5" y="281" font-size="10.5" fill="#d4d4d4" text-anchor="middle" textLength="15.299999999999999" lengthAdjust="spacingAndGlyphs" >1.2</text>
<text x="0" y="0" font-size="10.5" fill="#d4d4d4" text-anchor="middle" transform="translate(581.2,74.5) rotate(-90)" textLength="25.5" lengthAdjust="spacingAndGlyphs" >-4.14</text>
<text x="0" y="0" font-size="10.5" fill="#d4d4d4" text-anchor="middle" transform="translate(581.2,118.5) rotate(-90)" textLength="25.5" lengthAdjust="spacingAndGlyphs" >-2.76</text>
<text x="0" y="0" font-size="10.5" fill="#d4d4d4" text-anchor="middle" transform="translate(581.2,163.5) rotate(-90)" textLength="25.5" lengthAdjust="spacingAndGlyphs" >-1.38</text>
<text x="0" y="0" font-size="10.5" fill="#d4d4d4" text-anchor="middle" transform="translate(581.2,207.5) rotate(-90)" textLength="25.5" lengthAdjust="spacingAndGlyphs" >-0.00</text>
<text x="0" y="0" font-size="10.5" fill="#d4d4d4" text-anchor="middle" transform="translate(581.2,251.5) rotate(-90)" textLength="20.4" lengthAdjust="spacingAndGlyphs" >1.38</text>
<text x="802.2" y="294" font-size="14" fill="#eeeeee" text-anchor="middle" textLength="96.6" lengthAdjust="spacingAndGlyphs" >Frame Time [s]</text>
<text x="0" y="0" font-size="14" fill="#eeeeee" text-anchor="middle" transform="translate(568.2,148.05) rotate(-90)" textLength="127.5" lengthAdjust="spacingAndGlyphs" >Absolute Magnitude</text>
<text x="1020" y="39.8" font-size="13.33" fill="#eeeeee" text-anchor="end" >mass -2.11</text>
<polyline points="764.1,125.4 776.3,121.3 787.2,111.4 798.2,103.3 809.3,103.3 820.3,101.4 832.4,98.5 843.4,93.4 854.5,91.4 865.5,88.3 876.6,88.3 887.6,81.5 899.5,62.3 910.4,45.5 921.6,53.3 932.6,73.4 942.9,89.6 955.3,97.6 966.7,128.7" fill="none" stroke="#4a8c8e" stroke-width="1" stroke-linejoin="round" />
<path d="M762,125h5v1h-5zM764,123h1v5h-1z" fill="#5f9ea0"/>
<path d="M774,121h5v1h-5zM776,119h1v5h-1z" fill="#5f9ea0"/>
<path d="M785,111h5v1h-5zM787,109h1v5h-1z" fill="#5f9ea0"/>
<path d="M796,103h5v1h-5zM798,101h1v5h-1z" fill="#5f9ea0"/>
<path d="M807,103h5v1h-5zM809,101h1v5h-1z" fill="#5f9ea0"/>
<path d="M818,101h5v1h-5zM820,99h1v5h-1z" fill="#5f9ea0"/>
<path d="M830,98h5v1h-5zM832,96h1v5h-1z" fill="#5f9ea0"/>
<path d="M841,93h5v1h-5zM843,91h1v5h-1z" fill="#5f9ea0"/>
<path d="M852,91h5v1h-5zM854,89h1v5h-1z" fill="#5f9ea0"/>
<path d="M863,88h5v1h-5zM865,86h1v5h-1z" fill="#5f9ea0"/>
<path d="M874,88h5v1h-5zM876,86h1v5h-1z" fill="#5f9ea0"/>
<path d="M885,81h5v1h-5zM887,79h1v5h-1z" fill="#5f9ea0"/>
<path d="M897,62h5v1h-5zM899,60h1v5h-1z" fill="#5f9ea0"/>
<path d="M908,45h5v1h-5zM910,43h1v5h-1z" fill="#5f9ea0"/>
<path d="M919,53h5v1h-5zM921,51h1v5h-1z" fill="#5f9ea0"/>
<path d="M930,73h5v1h-5zM932,71h1v5h-1z" fill="#5f9ea0"/>
<path d="M940,89h5v1h-5zM942,87h1v5h-1z" fill="#5f9ea0"/>
<path d="M953,97h5v1h-5zM955,95h1v5h-1z" fill="#5f9ea0"/>
<path d="M964,128h5v1h-5zM966,126h1v5h-1z" fill="#5f9ea0"/>
<polyline points="698.4,183.4 709.3,188.2 720.5,169.7 731.4,159.3 742.4,143.5 753.5,138.4 765.3,121.3 776.3,115.2 787.2,104.5 798.2,99.4 809.3,94.3 821.5,86.3 832.4,88.3 843.4,84.4 854.5,82.4 865.5,80.2 877.6,77.3 888.6,76.4 899.5,71.3 910.4,41.4 921.6,36.5 933.0,49.4 944.4,76.5 955.3,94.0 966.7,93.5 977.1,164.4" fill="none" stroke="#0eaa45" stroke-width="1" stroke-linejoin="round" />
<path d="M696,183h5v1h-5zM698,181h1v5h-1z" fill="#11dd55"/>
<path d="M707,188h5v1h-5zM709,186h1v5h-1z" fill="#11dd55"/>
<path d="M718,169h5v1h-5zM720,167h1v5h-1z" fill="#11dd55"/>
<path d="M729,159h5v1h-5zM731,157h1v5h-1z" fill="#11dd55"/>
<path d="M740,143h5v1h-5zM742,141h1v5h-1z" fill="#11dd55"/>
<path d="M751,138h5v1h-5zM753,136h1v5h-1z" fill="#11dd55"/>
<path d="M763,121h5v1h-5zM765,119h1v5h-1z" fill="#11dd55"/>
<path d="M774,115h5v1h-5zM776,113h1v5h-1z" fill="#11dd55"/>
<path d="M785,104h5v1h-5zM787,102h1v5h-1z" fill="#11dd55"/>
<path d="M796,99h5v1h-5zM798,97h1v5h-1z" fill="#11dd55"/>
<path d="M807,94h5v1h-5zM809,92h1v5h-1z" fill="#11dd55"/>
<path d="M819,86h5v1h-5zM821,84h1v5h-1z" fill="#11dd55"/>
<path d="M830,88h5v1h-5zM832,86h1v5h-1z" fill="#11dd55"/>
<path d="M841,84h5v1h-5zM843,82h1v5h-1z" fill="#11dd55"/>
<path d="M852,82h5v1h-5zM854,80h1v5h-1z" fill="#11dd55"/>
<path d="M863,80h5v1h-5zM865,78h1v5h-1z" fill="#11dd55"/>
<path d="M875,77h5v1h-5zM877,75h1v5h-1z" fill="#11dd55"/>
<path d="M886,76h5v1h-5zM888,74h1v5h-1z" fill="#11dd55"/>
<path d="M897,71h5v1h-5zM899,69h1v5h-1z" fill="#11dd55"/>
<path d="M908,41h5v1h-5zM910,39h1v5h-1z" fill="#11dd55"/>
<path d="M919,36h5v1h-5zM921,34h1v5h-1z" fill="#11dd55"/>
<path d="M931,49h5v1h-5zM933,47h1v5h-1z" fill="#11dd55"/>
<path d="M942,76h5v1h-5zM944,74h1v5h-1z" fill="#11dd55"/>
<path d="M953,94h5v1h-5zM955,92h1v5h-1z" fill="#11dd55"/>
<path d="M964,93h5v1h-5zM966,91h1v5h-1z" fill="#11dd55"/>
<path d="M975,164h5v1h-5zM977,162h1v5h-1z" fill="#11dd55"/>
<polyline points="707.4,163.4 718.3,149.6 729.2,139.4 741.4,132.3 752.3,117.0 763.2,109.4 774.1,98.5 785.3,91.4 797.2,85.4 808.4,78.3 819.3,72.5 830.2,72.5 841.4,70.3 853.3,68.3 864.5,68.3 875.4,63.5 886.4,66.4 897.5,63.5 909.2,58.4 920.4,44.3 931.6,44.3 942.5,57.4 953.4,69.2 964.3,74.6 976.4,80.6 987.8,128.7 998.3,179.4" fill="none" stroke="#cc9600" stroke-width="1" stroke-linejoin="round" />
<path d="M705,163h5v1h-5zM707,161h1v5h-1z" fill="#ffbb00"/>
<path d="M716,149h5v1h-5zM718,147h1v5h-1z" fill="#ffbb00"/>
<path d="M727,139h5v1h-5zM729,137h1v5h-1z" fill="#ffbb00"/>
<path d="M739,132h5v1h-5zM741,130h1v5h-1z" fill="#ffbb00"/>
<path d="M750,117h5v1h-5zM752,115h1v5h-1z" fill="#ffbb00"/>
<path d="M761,109h5v1h-5zM763,107h1v5h-1z" fill="#ffbb00"/>
<path d="M772,98h5v1h-5zM774,96h1v5h-1z" fill="#ffbb00"/>
<path d="M783,91h5v1h-5zM785,89h1v5h-1z" fill="#ffbb00"/>
<path d="M795,85h5v1h-5zM797,83h1v5h-1z" fill="#ffbb00"/>
<path d="M806,78h5v1h-5zM808,76h1v5h-1z" fill="#ffbb00"/>
<path d="M817,72h5v1h-5zM819,70h1v5h-1z" fill="#ffbb00"/>
<path d="M828,72h5v1h-5zM830,70h1v5h-1z" fill="#ffbb00"/>
<path d="M839,70h5v1h-5zM841,68h1v5h-1z" fill="#ffbb00"/>
<path d="M851,68h5v1h-5zM853,66h1v5h-1z" fill="#ffbb00"/>
<path d="M862,68h5v1h-5zM864,66h1v5h-1z" fill="#ffbb00"/>
<path d="M873,63h5v1h-5zM875,61h1v5h-1z" fill="#ffbb00"/>
<path d="M884,66h5v1h-5zM886,64h1v5h-1z" fill="#ffbb00"/>
<path d="M895,63h5v1h-5zM897,61h1v5h-1z" fill="#ffbb00"/>
<path d="M907,58h5v1h-5zM909,56h1v5h-1z" fill="#ffbb00"/>
<path d="M918,44h5v1h-5zM920,42h1v5h-1z" fill="#ffbb00"/>
<path d="M929,44h5v1h-5zM931,42h1v5h-1z" fill="#ffbb00"/>
<path d="M940,57h5v1h-5zM942,55h1v5h-1z" fill="#ffbb00"/>
<path d="M951,69h5v1h-5zM953,67h1v5h-1z" fill="#ffbb00"/>
<path d="M962,74h5v1h-5zM964,72h1v5h-1z" fill="#ffbb00"/>
<path d="M974,80h5v1h-5zM976,78h1v5h-1z" fill="#ffbb00"/>
<path d="M985,128h5v1h-5zM987,126h1v5h-1z" fill="#ffbb00"/>
<path d="M996,179h5v1h-5zM998,177h1v5h-1z" fill="#ffbb00"/>
<polyline points="601.4,231.5 612.4,203.3 623.3,195.3 635.4,183.1 646.4,168.5 657.3,155.9 668.3,150.3 679.2,142.5 691.1,139.4 702.3,134.5 713.5,128.4 724.4,126.2 735.3,123.3 747.5,117.5 758.4,114.6 769.2,112.6 780.2,112.6 791.1,110.6 802.3,109.4 814.4,106.5 825.4,103.3 836.3,104.5 847.2,104.5 858.4,106.5 870.6,103.3 881.5,102.4 892.4,100.4 903.4,93.4 914.6,88.3 925.5,94.3 937.6,100.4 948.5,104.4 959.4,107.3 970.3,119.5 981.8,139.4 993.4,182.6 1004.5,257.5" fill="none" stroke="#5e3e8c" stroke-width="1.6" stroke-linejoin="round" />
<path d="M601.40,231.50L601.93,230.07M601.93,230.07L602.60,228.20M602.60,228.20L603.38,225.96M603.38,225.96L604.26,223.44M604.26,223.44L605.21,220.73M605.21,220.73L606.22,217.90M606.22,217.90L607.27,215.05M607.27,215.05L608.33,212.25M608.33,212.25L609.40,209.59M609.40,209.59L610.45,207.16M610.45,207.16L611.45,205.03M612.40,203.30L613.31,201.94M613.31,201.94L614.21,200.85M615.10,199.98L616.00,199.29M616.00,199.29L616.89,198.75M618.68,197.91L619.58,197.53M619.58,197.53L620.49,197.12M620.49,197.12L621.42,196.64M622.35,196.05L623.30,195.30M623.30,195.30L624.27,194.44M626.27,192.60L627.29,191.63M629.34,189.61L630.38,188.57M632.42,186.42L633.43,185.32M635.40,183.10L636.36,181.96M636.36,181.96L637.30,180.78M637.30,180.78L638.23,179.57M639.15,178.34L640.07,177.09M640.07,177.09L640.97,175.82M641.88,174.56L642.78,173.31M642.78,173.31L643.68,172.07M643.68,172.07L644.59,170.85M645.49,169.65L646.40,168.50M646.40,168.50L647.31,167.36M647.31,167.36L648.22,166.20M648.22,166.20L649.13,165.05M650.04,163.89L650.94,162.75M650.94,162.75L651.85,161.64M651.85,161.64L652.76,160.55M653.66,159.51L654.57,158.51M654.57,158.51L655.48,157.57M657.30,155.90L658.21,155.20M658.21,155.20L659.13,154.59M660.96,153.60L661.88,153.18M661.88,153.18L662.80,152.80M665.55,151.69L666.47,151.28M666.47,151.28L667.39,150.82M669.21,149.71L670.11,149.07M670.11,149.07L671.01,148.39M672.80,146.97L673.69,146.24M673.69,146.24L674.59,145.53M675.50,144.83L676.41,144.17M676.41,144.17L677.33,143.55M680.16,142.08L681.13,141.73M681.13,141.73L682.12,141.44M684.12,140.97L685.13,140.77M685.13,140.77L686.14,140.58M688.15,140.19L689.15,139.97M689.15,139.97L690.13,139.71M692.06,139.06L693.01,138.70M693.01,138.70L693.95,138.33M693.95,138.33L694.89,137.94M696.74,137.14L697.67,136.72M697.67,136.72L698.59,136.29M700.44,135.41L701.37,134.96M701.37,134.96L702.30,134.50M704.17,133.51L705.11,132.97M705.11,132.97L706.04,132.41M707.92,131.28L708.85,130.73M708.85,130.73L709.79,130.19M712.58,128.78L713.50,128.40M713.50,128.40L714.42,128.08M716.25,127.59L717.16,127.40M717.16,127.40L718.06,127.24M720.78,126.84L721.68,126.71M721.68,126.71L722.59,126.56M725.30,125.99L726.20,125.79M726.20,125.79L727.09,125.59M728.88,125.19L729.77,124.97M729.77,124.97L730.67,124.75M730.67,124.75L731.57,124.51M733.41,123.96L734.35,123.65M734.35,123.65L735.30,123.30M737.27,122.47L738.29,121.99M738.29,121.99L739.32,121.47M741.40,120.40L742.44,119.86M742.44,119.86L743.48,119.33M745.53,118.33L746.52,117.89M746.52,117.89L747.50,117.50M749.39,116.84L750.32,116.55M750.32,116.55L751.23,116.29M753.93,115.60L754.82,115.39M754.82,115.39L755.71,115.19M758.40,114.60L759.30,114.40M759.30,114.40L760.20,114.19M762.00,113.79L762.90,113.60M762.90,113.60L763.79,113.42M763.79,113.42L764.69,113.25M766.49,112.94L767.39,112.81M767.39,112.81L768.29,112.69M768.29,112.69L769.20,112.60M771.02,112.51L771.94,112.51M771.94,112.51L772.86,112.53M772.86,112.53L773.77,112.56M775.61,112.64L776.53,112.67M776.53,112.67L777.45,112.69M780.20,112.60L781.11,112.50M781.11,112.50L782.02,112.37M783.83,112.05L784.73,111.87M784.73,111.87L785.64,111.67M785.64,111.67L786.54,111.48M788.36,111.09L789.27,110.91M789.27,110.91L790.18,110.75M790.18,110.75L791.10,110.60M792.94,110.37L793.86,110.28M793.86,110.28L794.78,110.20M797.55,109.98L798.49,109.90M798.49,109.90L799.43,109.80M801.33,109.56L802.30,109.40M802.30,109.40L803.28,109.22M803.28,109.22L804.28,109.02M806.31,108.57L807.33,108.33M807.33,108.33L808.36,108.08M810.41,107.55L811.43,107.29M811.43,107.29L812.44,107.02M814.40,106.50L815.36,106.23M815.36,106.23L816.30,105.93M819.07,104.97L819.97,104.64M819.97,104.64L820.88,104.34M822.68,103.80L823.59,103.58M823.59,103.58L824.49,103.41M824.49,103.41L825.40,103.30M827.22,103.26L828.13,103.32M828.13,103.32L829.04,103.42M831.76,103.86L832.67,104.03M832.67,104.03L833.58,104.18M836.30,104.50L837.21,104.54M837.21,104.54L838.11,104.55M839.92,104.51L840.83,104.48M840.83,104.48L841.73,104.45M841.73,104.45L842.64,104.42M844.45,104.39L845.37,104.40M845.37,104.40L846.28,104.43M846.28,104.43L847.20,104.50M849.04,104.78L849.96,104.98M849.96,104.98L850.87,105.21M853.65,105.93L854.58,106.14M854.58,106.14L855.52,106.32M857.43,106.51L858.40,106.50M858.40,106.50L859.39,106.41M862.44,105.73L863.48,105.42M863.48,105.42L864.52,105.08M866.59,104.39L867.62,104.06M867.62,104.06L868.63,103.76M870.60,103.30L871.55,103.15M871.55,103.15L872.49,103.03M875.23,102.82L876.13,102.78M876.13,102.78L877.02,102.74M878.81,102.65L879.70,102.59M879.70,102.59L880.60,102.51M880.60,102.51L881.50,102.40M883.32,102.19L884.22,102.09M884.22,102.09L885.13,102.00M885.13,102.00L886.04,101.90M887.85,101.64L888.76,101.48M888.76,101.48L889.67,101.28M892.40,100.40L893.31,99.99M893.31,99.99L894.23,99.50M896.05,98.37L896.97,97.74M896.97,97.74L897.88,97.09M899.71,95.78L900.63,95.13M900.63,95.13L901.55,94.51M903.40,93.40L904.33,92.87M904.33,92.87L905.26,92.31M907.13,91.15L908.07,90.58M908.07,90.58L909.01,90.04M910.88,89.11L911.82,88.75M911.82,88.75L912.75,88.49M915.52,88.41L916.42,88.66M916.42,88.66L917.32,89.02M919.10,90.01L919.99,90.60M919.99,90.60L920.89,91.23M922.70,92.53L923.62,93.17M923.62,93.17L924.55,93.76M926.47,94.81L927.46,95.34M927.46,95.34L928.47,95.87M930.52,96.94L931.55,97.48M931.55,97.48L932.58,98.00M934.63,99.02L935.64,99.50M935.64,99.50L936.63,99.96M938.55,100.81L939.49,101.20M939.49,101.20L940.41,101.57M942.23,102.27L943.13,102.60M943.13,102.60L944.02,102.92M944.02,102.92L944.91,103.23M946.70,103.82L947.60,104.11M947.60,104.11L948.50,104.40M951.23,104.98L952.13,105.10M952.13,105.10L953.04,105.22M955.77,105.69L956.67,105.95M956.67,105.95L957.58,106.29M959.40,107.30L960.31,107.97M960.31,107.97L961.21,108.71M963.01,110.39L963.91,111.33M965.72,113.40L966.62,114.52M966.62,114.52L967.53,115.69M967.53,115.69L968.45,116.91M969.37,118.18L970.30,119.50M970.30,119.50L971.24,120.81M971.24,120.81L972.18,122.10M973.13,123.39L974.09,124.70M974.09,124.70L975.04,126.07M975.04,126.07L976.01,127.51M976.01,127.51L976.97,129.07M976.97,129.07L977.94,130.76M977.94,130.76L978.90,132.61M978.90,132.61L979.87,134.65M979.87,134.65L980.84,136.90M981.80,139.40L982.76,142.08M983.73,144.88L984.70,147.82M985.68,150.90L986.65,154.14M986.65,154.14L987.62,157.56M987.62,157.56L988.60,161.17M988.60,161.17L989.57,164.99M989.57,164.99L990.53,169.03M991.49,173.30L992.45,177.82M992.45,177.82L993.40,182.60M993.40,182.60L994.38,187.97M994.38,187.97L995.41,194.12M995.41,194.12L996.47,200.85M996.47,200.85L997.55,207.99M998.62,215.35L999.68,222.75M999.68,222.75L1000.69,230.00M1000.69,230.00L1001.64,236.91M1001.64,236.91L1002.52,243.30M1002.52,243.30L1003.30,248.98M1003.30,248.98L1003.97,253.78M1003.97,253.78L1004.50,257.50" stroke="#ffffff" stroke-width="1.2" fill="none"/>
<path d="M599,231h5v1h-5zM601,229h1v5h-1z" fill="#9966cc"/>
<path d="M610,203h5v1h-5zM612,201h1v5h-1z" fill="#9966cc"/>
<path d="M621,195h5v1h-5zM623,193h1v5h-1z" fill="#9966cc"/>
<path d="M633,183h5v1h-5zM635,181h1v5h-1z" fill="#9966cc"/>
<path d="M644,168h5v1h-5zM646,166h1v5h-1z" fill="#9966cc"/>
<path d="M655,155h5v1h-5zM657,153h1v5h-1z" fill="#9966cc"/>
<path d="M666,150h5v1h-5zM668,148h1v5h-1z" fill="#9966cc"/>
<path d="M677,142h5v1h-5zM679,140h1v5h-1z" fill="#9966cc"/>
<path d="M689,139h5v1h-5zM691,137h1v5h-1z" fill="#9966cc"/>
<path d="M700,134h5v1h-5zM702,132h1v5h-1z" fill="#9966cc"/>
<path d="M711,128h5v1h-5zM713,126h1v5h-1z" fill="#9966cc"/>
<path d="M722,126h5v1h-5zM724,124h1v5h-1z" fill="#9966cc"/>
<path d="M733,123h5v1h-5zM735,121h1v5h-1z" fill="#9966cc"/>
<path d="M745,117h5v1h-5zM747,115h1v5h-1z" fill="#9966cc"/>
<path d="M756,114h5v1h-5zM758,112h1v5h-1z" fill="#9966cc"/>
<path d="M767,112h5v1h-5zM769,110h1v5h-1z" fill="#9966cc"/>
<path d="M778,112h5v1h-5zM780,110h1v5h-1z" fill="#9966cc"/>
<path d="M789,110h5v1h-5zM791,108h1v5h-1z" fill="#9966cc"/>
<path d="M800,109h5v1h-5zM802,107h1v5h-1z" fill="#9966cc"/>
<path d="M812,106h5v1h-5zM814,104h1v5h-1z" fill="#9966cc"/>
<path d="M823,103h5v1h-5zM825,101h1v5h-1z" fill="#9966cc"/>
<path d="M834,104h5v1h-5zM836,102h1v5h-1z" fill="#9966cc"/>
<path d="M845,104h5v1h-5zM847,102h1v5h-1z" fill="#9966cc"/>
<path d="M856,106h5v1h-5zM858,104h1v5h-1z" fill="#9966cc"/>
<path d="M868,103h5v1h-5zM870,101h1v5h-1z" fill="#9966cc"/>
<path d="M879,102h5v1h-5zM881,100h1v5h-1z" fill="#9966cc"/>
<path d="M890,100h5v1h-5zM892,98h1v5h-1z" fill="#9966cc"/>
<path d="M901,93h5v1h-5zM903,91h1v5h-1z" fill="#9966cc"/>
<path d="M912,88h5v1h-5zM914,86h1v5h-1z" fill="#9966cc"/>
<path d="M923,94h5v1h-5zM925,92h1v5h-1z" fill="#9966cc"/>
<path d="M935,100h5v1h-5zM937,98h1v5h-1z" fill="#9966cc"/>
<path d="M946,104h5v1h-5zM948,102h1v5h-1z" fill="#9966cc"/>
<path d="M957,107h5v1h-5zM959,105h1v5h-1z" fill="#9966cc"/>
<path d="M968,119h5v1h-5zM970,117h1v5h-1z" fill="#9966cc"/>
<path d="M979,139h5v1h-5zM981,137h1v5h-1z" fill="#9966cc"/>
<path d="M991,182h5v1h-5zM993,180h1v5h-1z" fill="#9966cc"/>
<path d="M1002,257h5v1h-5zM1004,255h1v5h-1z" fill="#9966cc"/>
<defs><clipPath id="mapclip"><rect x="30" y="305" width="237" height="241"/></clipPath><clipPath id="orbclip"><rect x="281" y="305" width="262" height="252"/></clipPath></defs>
<g clip-path="url(#mapclip)">
<polyline points="29.5,420.5 32.5,420.5 32.5,421.5 32.5,424.5 33.5,424.5 33.5,424.5 33.5,426.5 34.5,426.5 34.5,427.5 35.5,427.5 35.5,428.5 35.5,430.5 37.5,430.5 37.5,431.5 38.5,431.5 40.5,431.5 40.5,433.5 41.5,433.5 41.5,433.5 41.5,433.5 44.5,433.5 44.5,434.5 45.5,434.5 45.5,434.5 45.5,434.5 47.5,434.5 47.5,436.5 48.5,436.5 48.5,437.5 48.5,438.5 50.5,438.5 51.5,438.5 51.5,438.5 52.5,438.5 52.5,440.5 52.5,439.5 54.5,439.5 54.5,437.5 54.5,437.5 54.5,435.5 56.5,435.5 57.5,435.5 57.5,434.5 57.5,433.5 58.5,433.5 59.5,433.5 59.5,432.5 59.5,430.5 61.5,430.5 63.5,430.5 63.5,428.5 63.5,428.5 63.5,428.5 63.5,426.5 64.5,426.5 64.5,425.5 65.5,425.5 68.5,425.5 68.5,424.5 70.5,424.5 70.5,422.5 70.5,422.5 71.5,422.5 72.5,422.5 72.5,421.5 74.5,421.5 74.5,420.5 75.5,420.5 75.5,418.5 75.5,418.5 75.5,417.5 77.5,417.5 77.5,416.5 78.5,416.5 78.5,414.5 78.5,414.5 78.5,413.5 78.5,412.5 79.5,412.5 80.5,412.5 80.5,410.5 80.5,410.5 81.5,410.5 82.5,410.5 82.5,407.5 83.5,407.5 83.5,407.5 84.5,407.5 84.5,405.5 86.5,405.5 86.5,405.5 87.5,405.5 87.5,403.5 87.5,401.5 87.5,401.5 87.5,401.5 88.5,401.5 90.5,401.5 90.5,398.5 90.5,398.5 90.5,397.5 90.5,396.5 92.5,396.5 94.5,396.5 94.5,395.5 94.5,394.5 94.5,394.5 95.5,394.5 95.5,392.5 96.5,392.5 96.5,391.5 96.5,389.5 95.5,389.5 96.5,389.5 96.5,386.5 96.5,386.5 96.5,386.5 96.5,384.5 98.5,384.5 98.5,384.5 99.5,384.5 100.5,384.5 100.5,385.5 100.5,383.5 102.5,383.5 102.5,383.5 104.5,383.5 104.5,383.5 106.5,383.5 106.5,383.5 106.5,381.5 107.5,381.5 107.5,380.5 108.5,380.5 108.5,380.5 110.5,380.5 110.5,379.5 111.5,379.5 111.5,381.5 111.5,382.5 111.5,382.5 113.5,382.5 113.5,385.5 113.5,385.5 113.5,383.5 113.5,383.5 113.5,381.5 113.5,380.5 115.5,380.5 115.5,378.5 116.5,378.5 116.5,378.5 116.5,378.5 118.5,378.5 118.5,377.5 120.5,377.5 120.5,377.5 120.5,377.5 120.5,380.5 121.5,380.5 121.5,382.5 121.5,382.5 121.5,383.5 121.5,383.5 121.5,385.5 123.5,385.5 123.5,383.5 123.5,381.5 124.5,381.5 124.5,380.5 125.5,380.5 125.5,379.5 126.5,379.5 128.5,379.5 128.5,378.5 128.5,376.5 129.5,376.5 131.5,376.5 131.5,375.5 132.5,375.5 132.5,374.5 134.5,374.5 134.5,374.5 135.5,374.5 135.5,372.5 136.5,372.5 136.5,371.5 136.5,369.5 137.5,369.5 136.5,369.5 136.5,367.5 136.5,365.5 136.5,365.5 138.5,365.5 138.5,364.5 138.5,364.5 138.5,362.5 139.5,362.5 139.5,361.5 139.5,361.5 139.5,359.5 141.5,359.5 141.5,358.5 141.5,358.5 141.5,356.5 141.5,356.5 141.5,355.5 142.5,355.5 142.5,354.5 142.5,352.5 144.5,352.5 144.5,352.5 144.5,352.5 144.5,349.5 146.5,349.5 146.5,348.5 147.5,348.5 147.5,348.5 149.5,348.5 149.5,347.5 150.5,347.5 152.5,347.5 152.5,345.5 152.5,345.5 152.5,344.5 152.5,341.5 153.5,341.5 155.5,341.5 155.5,341.5 155.5,340.5 156.5,340.5 156.5,339.5 157.5,339.5 159.5,339.5 159.5,336.5 159.5,335.5 159.5,335.5 159.5,334.5 160.5,334.5 160.5,332.5 160.5,332.5 160.5,331.5 161.5,331.5 161.5,329.5 161.5,329.5 162.5,329.5 162.5,328.5 162.5,327.5 162.5,327.5 162.5,325.5 164.5,325.5 164.5,323.5 165.5,323.5 165.5,321.5 165.5,321.5 165.5,321.5 166.5,321.5 166.5,319.5 167.5,319.5 167.5,318.5 169.5,318.5 169.5,317.5 169.5,317.5 169.5,316.5 171.5,316.5 172.5,316.5 172.5,314.5 173.5,314.5 173.5,312.5 177.5,312.5 177.5,312.5 178.5,312.5 178.5,312.5 180.5,312.5 180.5,312.5 180.5,314.5 180.5,314.5 180.5,315.5 181.5,315.5 181.5,316.5 182.5,316.5 182.5,318.5 183.5,318.5 183.5,320.5 184.5,320.5 186.5,320.5 186.5,320.5 187.5,320.5 187.5,321.5 187.5,320.5 189.5,320.5 189.5,321.5 190.5,321.5 190.5,321.5 192.5,321.5 192.5,322.5 194.5,322.5 194.5,321.5 196.5,321.5 197.5,321.5 197.5,321.5 197.5,319.5 199.5,319.5 201.5,319.5 201.5,320.5 201.5,320.5 201.5,319.5 203.5,319.5 203.5,318.5 203.5,318.5 205.5,318.5 205.5,318.5 205.5,316.5 205.5,315.5 207.5,315.5 207.5,314.5 208.5,314.5 210.5,314.5 210.5,312.5 211.5,312.5 211.5,312.5 211.5,312.5 211.5,311.5 211.5,310.5 214.5,310.5 214.5,310.5 214.5,310.5 214.5,309.5 217.5,309.5 217.5,306.5 217.5,306.5 219.5,306.5 219.5,309.5" fill="none" stroke="#10285a" stroke-width="1" stroke-linejoin="round" stroke-linejoin="miter" shape-rendering="crispEdges"/>
<polyline points="35.5,544.5 37.5,544.5 37.5,543.5 37.5,541.5 38.5,541.5 37.5,541.5 37.5,540.5 39.5,540.5 39.5,539.5 40.5,539.5 40.5,537.5 40.5,535.5 41.5,535.5 41.5,533.5 41.5,533.5 41.5,532.5 43.5,532.5 43.5,532.5 44.5,532.5 43.5,532.5 43.5,529.5 45.5,529.5 45.5,529.5 45.5,529.5 45.5,526.5 45.5,526.5 46.5,526.5 46.5,524.5 46.5,524.5 47.5,524.5 47.5,522.5 49.5,522.5 49.5,520.5 49.5,520.5 49.5,519.5 50.5,519.5 50.5,518.5 50.5,516.5 50.5,516.5 51.5,516.5 51.5,513.5 51.5,513.5 51.5,513.5 51.5,511.5 52.5,511.5 52.5,509.5 52.5,509.5 52.5,509.5 53.5,509.5 53.5,507.5 54.5,507.5 56.5,507.5 56.5,505.5 57.5,505.5 57.5,505.5 58.5,505.5 58.5,503.5 58.5,501.5 59.5,501.5 61.5,501.5 61.5,500.5 61.5,500.5 61.5,499.5 61.5,497.5 62.5,497.5 62.5,497.5 62.5,497.5 63.5,497.5 63.5,495.5 64.5,495.5 64.5,493.5 64.5,491.5 65.5,491.5 66.5,491.5 66.5,491.5 66.5,489.5 67.5,489.5 67.5,488.5 68.5,488.5 68.5,486.5 69.5,486.5 69.5,486.5 69.5,484.5 69.5,484.5 69.5,483.5 70.5,483.5 70.5,481.5 69.5,481.5 69.5,479.5 69.5,478.5 72.5,478.5 72.5,478.5 72.5,477.5 73.5,477.5 73.5,476.5 76.5,476.5 76.5,474.5 76.5,473.5 76.5,473.5 76.5,471.5 78.5,471.5 78.5,470.5 78.5,470.5 78.5,470.5 80.5,470.5 80.5,467.5 81.5,467.5 83.5,467.5 83.5,467.5 83.5,465.5 83.5,465.5 84.5,465.5 84.5,463.5 84.5,462.5 85.5,462.5 86.5,462.5 86.5,461.5 86.5,461.5 88.5,461.5 90.5,461.5 90.5,459.5 90.5,459.5 90.5,458.5 92.5,458.5 92.5,457.5 92.5,457.5 92.5,456.5 92.5,455.5 95.5,455.5 95.5,456.5 96.5,456.5 99.5,456.5 99.5,455.5 99.5,455.5 99.5,455.5 99.5,455.5 101.5,455.5 101.5,456.5 104.5,456.5 105.5,456.5 105.5,454.5 105.5,455.5 105.5,455.5 105.5,454.5 108.5,454.5 108.5,453.5 110.5,453.5 111.5,453.5 111.5,454.5 113.5,454.5 113.5,454.5 113.5,452.5 115.5,452.5 115.5,452.5 116.5,452.5 116.5,452.5 118.5,452.5 120.5,452.5 120.5,453.5 121.5,453.5 121.5,453.5 123.5,453.5 123.5,453.5 123.5,453.5 123.5,453.5 123.5,453.5 125.5,453.5 125.5,453.5 128.5,453.5 128.5,453.5 128.5,453.5 131.5,453.5 131.5,454.5 131.5,453.5 132.5,453.5 134.5,453.5 134.5,454.5 136.5,454.5 136.5,454.5 136.5,454.5 138.5,454.5 138.5,455.5 140.5,455.5 142.5,455.5 142.5,455.5 142.5,455.5 144.5,455.5 144.5,454.5 145.5,454.5 148.5,454.5 148.5,455.5 148.5,455.5 148.5,454.5 150.5,454.5 150.5,455.5 151.5,455.5 151.5,456.5 153.5,456.5 153.5,458.5 153.5,458.5 153.5,458.5 153.5,460.5 154.5,460.5 156.5,460.5 156.5,461.5 158.5,461.5 158.5,461.5 159.5,461.5 159.5,460.5 159.5,460.5 162.5,460.5 163.5,460.5 163.5,459.5 164.5,459.5 164.5,459.5 166.5,459.5 166.5,459.5 166.5,459.5 168.5,459.5 168.5,460.5 169.5,460.5 171.5,460.5 171.5,461.5 172.5,461.5 172.5,461.5 173.5,461.5 173.5,461.5 173.5,458.5 175.5,458.5 175.5,458.5 176.5,458.5 178.5,458.5 178.5,457.5 179.5,457.5 179.5,456.5 179.5,454.5 181.5,454.5 181.5,454.5 181.5,454.5 183.5,454.5 183.5,451.5 185.5,451.5 185.5,451.5 185.5,449.5 185.5,449.5 186.5,449.5 186.5,447.5 186.5,447.5 188.5,447.5 191.5,447.5 191.5,446.5 192.5,446.5 192.5,445.5 192.5,446.5 193.5,446.5 193.5,445.5 195.5,445.5 196.5,445.5 196.5,444.5 198.5,444.5 198.5,444.5 198.5,443.5 199.5,443.5 202.5,443.5 202.5,442.5 203.5,442.5 203.5,442.5 203.5,441.5 206.5,441.5 206.5,441.5 206.5,440.5 206.5,440.5 210.5,440.5 211.5,440.5 211.5,441.5 211.5,439.5 213.5,439.5 216.5,439.5 216.5,440.5 217.5,440.5 217.5,439.5" fill="none" stroke="#10285a" stroke-width="1" stroke-linejoin="round" stroke-linejoin="miter" shape-rendering="crispEdges"/>
<polyline points="138.5,547.5 139.5,547.5 139.5,545.5 138.5,545.5 138.5,543.5 138.5,541.5 139.5,541.5 139.5,541.5 139.5,539.5 139.5,539.5 140.5,539.5 140.5,536.5 139.5,536.5 140.5,536.5 140.5,535.5 140.5,535.5 140.5,532.5 140.5,532.5 142.5,532.5 142.5,532.5 142.5,529.5 144.5,529.5 144.5,528.5 145.5,528.5 145.5,527.5 146.5,527.5 146.5,525.5 147.5,525.5 147.5,523.5 148.5,523.5 148.5,523.5 148.5,521.5 150.5,521.5 150.5,520.5 150.5,520.5 152.5,520.5 152.5,518.5 152.5,517.5 152.5,517.5 154.5,517.5 154.5,517.5 154.5,517.5 154.5,515.5 154.5,513.5 156.5,513.5 157.5,513.5 157.5,511.5 158.5,511.5 158.5,511.5 159.5,511.5 159.5,509.5 159.5,508.5 160.5,508.5 160.5,507.5 161.5,507.5 161.5,506.5 162.5,506.5 162.5,506.5 162.5,505.5 164.5,505.5 164.5,503.5 166.5,503.5 166.5,503.5 166.5,501.5 167.5,501.5 167.5,500.5 168.5,500.5 169.5,500.5 169.5,499.5 169.5,498.5 170.5,498.5 172.5,498.5 172.5,496.5 172.5,495.5 173.5,495.5 173.5,495.5 174.5,495.5 175.5,495.5 175.5,493.5 175.5,493.5 177.5,493.5 179.5,493.5 179.5,491.5 179.5,491.5 180.5,491.5 181.5,491.5 181.5,490.5 181.5,490.5 181.5,489.5 183.5,489.5 183.5,488.5 183.5,485.5 185.5,485.5 185.5,485.5 185.5,485.5 185.5,482.5 185.5,482.5 185.5,480.5 187.5,480.5 188.5,480.5 188.5,479.5 188.5,479.5 188.5,477.5 188.5,476.5 188.5,476.5 188.5,475.5 189.5,475.5 189.5,474.5 192.5,474.5 192.5,474.5 192.5,474.5 194.5,474.5 194.5,475.5 197.5,475.5 197.5,474.5 198.5,474.5 198.5,474.5 199.5,474.5 199.5,473.5 199.5,472.5 202.5,472.5 202.5,471.5 204.5,471.5 204.5,471.5 205.5,471.5 205.5,471.5 205.5,470.5 205.5,468.5 208.5,468.5 208.5,467.5 209.5,467.5 210.5,467.5 210.5,466.5 210.5,464.5 209.5,464.5 210.5,464.5 210.5,462.5 210.5,462.5 210.5,460.5 211.5,460.5 211.5,458.5 212.5,458.5 212.5,458.5 213.5,458.5 213.5,457.5 214.5,457.5 214.5,455.5 214.5,455.5 216.5,455.5" fill="none" stroke="#10285a" stroke-width="1" stroke-linejoin="round" stroke-linejoin="miter" shape-rendering="crispEdges"/>
<polyline points="226.5,457.5 227.5,457.5 227.5,457.5 228.5,457.5 228.5,459.5 229.5,459.5 229.5,461.5 229.5,461.5 229.5,462.5 229.5,463.5 231.5,463.5 231.5,464.5 232.5,464.5 232.5,465.5 233.5,465.5 233.5,466.5 235.5,466.5 235.5,466.5 237.5,466.5 238.5,466.5 238.5,466.5 239.5,466.5 239.5,468.5 241.5,468.5 241.5,468.5 241.5,469.5 243.5,469.5 244.5,469.5 244.5,470.5 246.5,470.5 246.5,470.5 248.5,470.5 248.5,471.5 250.5,471.5 250.5,471.5 251.5,471.5 251.5,472.5 252.5,472.5 252.5,473.5 252.5,472.5 254.5,472.5 256.5,472.5 256.5,475.5 257.5,475.5 257.5,474.5 257.5,475.5 259.5,475.5 259.5,477.5 261.5,477.5 261.5,478.5 263.5,478.5 263.5,480.5 263.5,480.5 264.5,480.5 264.5,481.5 266.5,481.5 266.5,483.5 265.5,483.5 265.5,484.5 265.5,485.5 268.5,485.5 268.5,485.5 268.5,486.5" fill="none" stroke="#10285a" stroke-width="1" stroke-linejoin="round" stroke-linejoin="miter" shape-rendering="crispEdges"/>
<polyline points="233.5,405.5 233.5,407.5 233.5,407.5 233.5,408.5 233.5,408.5 233.5,408.5 234.5,408.5 235.5,408.5 235.5,411.5 237.5,411.5 237.5,411.5 237.5,411.5 237.5,414.5 237.5,414.5 238.5,414.5 238.5,416.5 239.5,416.5 239.5,418.5 240.5,418.5 241.5,418.5 241.5,419.5 241.5,419.5 241.5,422.5 241.5,422.5 242.5,422.5 242.5,424.5 244.5,424.5 245.5,424.5 245.5,426.5 244.5,426.5 244.5,428.5 244.5,429.5 242.5,429.5 241.5,429.5 241.5,432.5 240.5,432.5 240.5,433.5 238.5,433.5 238.5,433.5 238.5,436.5 238.5,436.5 238.5,436.5 237.5,436.5 237.5,436.5 237.5,437.5 235.5,437.5 235.5,439.5 234.5,439.5 234.5,440.5" fill="none" stroke="#10285a" stroke-width="1" stroke-linejoin="round" stroke-linejoin="miter" shape-rendering="crispEdges"/>
<polyline points="204.5,422.5 204.5,424.5 206.5,424.5 206.5,426.5 207.5,426.5 207.5,425.5 211.5,425.5 211.5,425.5 213.5,425.5 213.5,425.5 213.5,428.5 214.5,428.5 214.5,430.5 214.5,431.5 214.5,431.5 215.5,431.5 215.5,433.5 215.5,433.5 215.5,435.5 215.5,437.5 215.5,437.5 215.5,438.5 215.5,438.5 215.5,439.5 213.5,439.5 211.5,439.5 211.5,440.5 210.5,440.5 210.5,441.5 209.5,441.5 209.5,442.5 209.5,442.5 206.5,442.5 205.5,442.5 205.5,441.5 205.5,442.5 202.5,442.5 202.5,442.5 201.5,442.5 199.5,442.5 199.5,444.5" fill="none" stroke="#10285a" stroke-width="1" stroke-linejoin="round" stroke-linejoin="miter" shape-rendering="crispEdges"/>
<polyline points="234.5,442.5 234.5,440.5 235.5,440.5 237.5,440.5 237.5,438.5 237.5,437.5 237.5,437.5 237.5,437.5 238.5,437.5 238.5,435.5 239.5,435.5" fill="none" stroke="#10285a" stroke-width="1" stroke-linejoin="round" stroke-linejoin="miter" shape-rendering="crispEdges"/>
<polyline points="227.5,456.5 227.5,456.5 227.5,458.5 227.5,461.5 227.5,461.5 228.5,461.5 228.5,462.5 230.5,462.5 230.5,464.5 232.5,464.5 232.5,464.5" fill="none" stroke="#10285a" stroke-width="1" stroke-linejoin="round" stroke-linejoin="miter" shape-rendering="crispEdges"/>
<polyline points="29.5,385.5 45.5,385.5 45.5,386.5 268.0,386.5" fill="none" stroke="#4e3715" stroke-width="1" stroke-linejoin="round" shape-rendering="crispEdges"/>
<polyline points="99.9,385.4 128.3,546.5" fill="none" stroke="#4e3715" stroke-width="1" stroke-linejoin="round" shape-rendering="crispEdges"/>
<polyline points="193.5,386.5 193.5,386.5 193.5,385.5 193.5,383.5 194.5,383.5 194.5,381.5 193.5,381.5 194.5,381.5 194.5,380.5 194.5,378.5 194.5,378.5 195.5,378.5 195.5,376.5 194.5,376.5 194.5,374.5 194.5,373.5 195.5,373.5 195.5,371.5 195.5,371.5 195.5,371.5 195.5,369.5 196.5,369.5 196.5,367.5 195.5,367.5 195.5,366.5 195.5,364.5 197.5,364.5 197.5,363.5 198.5,363.5 199.5,363.5 199.5,363.5 199.5,363.5 202.5,363.5 204.5,363.5 204.5,362.5 204.5,362.5 206.5,362.5 208.5,362.5 208.5,362.5 208.5,362.5 210.5,362.5 210.5,362.5 212.5,362.5 212.5,360.5 213.5,360.5 213.5,359.5 213.5,359.5 213.5,359.5 213.5,357.5 214.5,357.5 214.5,354.5 214.5,354.5 214.5,354.5 214.5,351.5 215.5,351.5 215.5,350.5 215.5,350.5 215.5,347.5 216.5,347.5 218.5,347.5 218.5,346.5 218.5,345.5 219.5,345.5 219.5,344.5 221.5,344.5 221.5,343.5 223.5,343.5 224.5,343.5 224.5,342.5 227.5,342.5 227.5,340.5 228.5,340.5 228.5,340.5 230.5,340.5 230.5,339.5 230.5,338.5 231.5,338.5 231.5,336.5 233.5,336.5 233.5,336.5 235.5,336.5 235.5,336.5 237.5,336.5 237.5,336.5 239.5,336.5 239.5,335.5 240.5,335.5 240.5,335.5 241.5,335.5 241.5,335.5 243.5,335.5 243.5,335.5 245.5,335.5 245.5,335.5 247.5,335.5 247.5,335.5 250.5,335.5 251.5,335.5 251.5,336.5 251.5,336.5 253.5,336.5 255.5,336.5 255.5,335.5 255.5,334.5 256.5,334.5 257.5,334.5 257.5,332.5 259.5,332.5 259.5,330.5 260.5,330.5 260.5,329.5 260.5,328.5 263.5,328.5 263.5,327.5 265.5,327.5 265.5,327.5 266.5,327.5 268.5,327.5 268.5,326.5" fill="none" stroke="#4e3715" stroke-width="1" stroke-linejoin="round" stroke-linejoin="miter" shape-rendering="crispEdges"/>
<polyline points="267.5,404.0 264.1,410.6 267.5,414.0" fill="none" stroke="#4e3715" stroke-width="1" stroke-linejoin="round" shape-rendering="crispEdges"/>
<path d="M74,307h1v1h-1zM74,316h1v1h-1zM74,325h1v1h-1zM74,334h1v1h-1zM74,342h1v1h-1zM74,351h1v1h-1zM74,360h1v1h-1zM74,369h1v1h-1zM74,377h1v1h-1zM74,386h1v1h-1zM74,395h1v1h-1zM74,404h1v1h-1zM74,412h1v1h-1zM74,421h1v1h-1zM74,430h1v1h-1zM74,438h1v1h-1zM74,447h1v1h-1zM74,456h1v1h-1zM74,465h1v1h-1zM74,473h1v1h-1zM74,482h1v1h-1zM74,491h1v1h-1zM74,500h1v1h-1zM74,508h1v1h-1zM74,517h1v1h-1zM74,526h1v1h-1zM74,535h1v1h-1zM74,543h1v1h-1zM145,307h1v1h-1zM145,316h1v1h-1zM145,325h1v1h-1zM145,334h1v1h-1zM145,342h1v1h-1zM145,351h1v1h-1zM145,360h1v1h-1zM145,369h1v1h-1zM145,377h1v1h-1zM145,386h1v1h-1zM145,395h1v1h-1zM145,404h1v1h-1zM145,412h1v1h-1zM145,421h1v1h-1zM145,430h1v1h-1zM145,438h1v1h-1zM145,447h1v1h-1zM145,456h1v1h-1zM145,465h1v1h-1zM145,473h1v1h-1zM145,482h1v1h-1zM145,491h1v1h-1zM145,500h1v1h-1zM145,508h1v1h-1zM145,517h1v1h-1zM145,526h1v1h-1zM145,535h1v1h-1zM145,543h1v1h-1zM216,307h1v1h-1zM216,316h1v1h-1zM216,325h1v1h-1zM216,334h1v1h-1zM216,342h1v1h-1zM216,351h1v1h-1zM216,360h1v1h-1zM216,369h1v1h-1zM216,377h1v1h-1zM216,386h1v1h-1zM216,395h1v1h-1zM216,404h1v1h-1zM216,412h1v1h-1zM216,421h1v1h-1zM216,430h1v1h-1zM216,438h1v1h-1zM216,447h1v1h-1zM216,456h1v1h-1zM216,465h1v1h-1zM216,473h1v1h-1zM216,482h1v1h-1zM216,491h1v1h-1zM216,500h1v1h-1zM216,508h1v1h-1zM216,517h1v1h-1zM216,526h1v1h-1zM216,535h1v1h-1zM216,543h1v1h-1zM36,386h1v1h-1zM44,386h1v1h-1zM51,386h1v1h-1zM58,386h1v1h-1zM65,386h1v1h-1zM73,386h1v1h-1zM80,386h1v1h-1zM87,386h1v1h-1zM94,386h1v1h-1zM102,386h1v1h-1zM109,386h1v1h-1zM116,386h1v1h-1zM124,386h1v1h-1zM131,386h1v1h-1zM138,386h1v1h-1zM145,386h1v1h-1zM153,386h1v1h-1zM160,386h1v1h-1zM167,386h1v1h-1zM174,386h1v1h-1zM182,386h1v1h-1zM189,386h1v1h-1zM196,386h1v1h-1zM203,386h1v1h-1zM211,386h1v1h-1zM218,386h1v1h-1zM225,386h1v1h-1zM232,386h1v1h-1zM240,386h1v1h-1zM247,386h1v1h-1zM254,386h1v1h-1zM261,386h1v1h-1zM36,473h1v1h-1zM44,473h1v1h-1zM51,473h1v1h-1zM58,473h1v1h-1zM65,473h1v1h-1zM73,473h1v1h-1zM80,473h1v1h-1zM87,473h1v1h-1zM94,473h1v1h-1zM102,473h1v1h-1zM109,473h1v1h-1zM116,473h1v1h-1zM124,473h1v1h-1zM131,473h1v1h-1zM138,473h1v1h-1zM145,473h1v1h-1zM153,473h1v1h-1zM160,473h1v1h-1zM167,473h1v1h-1zM174,473h1v1h-1zM182,473h1v1h-1zM189,473h1v1h-1zM196,473h1v1h-1zM203,473h1v1h-1zM211,473h1v1h-1zM218,473h1v1h-1zM225,473h1v1h-1zM232,473h1v1h-1zM240,473h1v1h-1zM247,473h1v1h-1zM254,473h1v1h-1zM261,473h1v1h-1z" fill="#7e8e76"/>
<polyline points="220.5,433.5 220.5,433.5 221.5,433.5 221.5,433.5 221.5,434.5 221.5,435.5 222.5,435.5 224.5,435.5 224.5,437.5 223.5,437.5 223.5,439.5 223.5,439.5 220.5,439.5 220.5,438.5 221.5,438.5 221.5,438.5 221.5,437.5 221.5,435.5 219.5,435.5 218.5,435.5 218.5,436.5 218.5,437.5 218.5,437.5 217.5,437.5 217.5,438.5 217.5,440.5 218.5,440.5 218.5,441.5 218.5,441.5 218.5,444.5 218.5,444.5 218.5,446.5 220.5,446.5 220.5,446.5 220.5,447.5 220.5,447.5 220.5,447.5 221.5,447.5 221.5,449.5 221.5,449.5 221.5,450.5 218.5,450.5 218.5,451.5 218.5,451.5 218.5,451.5 218.5,450.5 216.5,450.5 216.5,452.5 215.5,452.5 215.5,452.5 215.5,453.5 215.5,454.5 213.5,454.5 213.5,453.5 212.5,453.5 210.5,453.5 210.5,454.5 210.5,455.5 211.5,455.5 211.5,455.5 211.5,457.5 211.5,457.5 211.5,458.5 211.5,458.5 212.5,458.5 214.5,458.5 214.5,459.5 214.5,459.5 216.5,459.5 216.5,458.5 217.5,458.5 217.5,457.5 218.5,457.5 218.5,457.5 220.5,457.5 221.5,457.5 221.5,457.5 223.5,457.5 223.5,455.5 223.5,455.5 223.5,453.5 223.5,452.5 223.5,452.5 223.5,450.5 225.5,450.5 223.5,450.5 223.5,448.5 226.5,448.5 226.5,447.5 226.5,447.5 226.5,445.5 226.5,445.5 226.5,445.5 226.5,444.5 227.5,444.5 227.5,443.5 230.5,443.5 230.5,441.5 231.5,441.5 231.5,441.5 231.5,439.5 231.5,439.5 230.5,439.5 230.5,438.5 230.5,438.5 230.5,437.5 228.5,437.5 228.5,436.5 228.5,436.5 227.5,436.5 227.5,434.5 226.5,434.5 226.5,434.5 226.5,435.5 226.5,435.5 226.5,435.5 226.5,435.5 226.5,438.5 226.5,438.5 225.5,438.5 225.5,439.5 225.5,439.5 228.5,439.5 228.5,441.5 228.5,441.5 227.5,441.5 227.5,441.5 225.5,441.5 225.5,443.5 224.5,443.5 224.5,443.5 222.5,443.5 222.5,445.5 225.5,445.5 225.5,445.5 222.5,445.5 222.5,448.5 222.5,448.5 222.5,446.5 222.5,446.5 222.5,444.5 222.5,443.5 221.5,443.5 221.5,443.5 221.5,442.5 221.5,440.5 221.5,440.5 220.5,440.5 220.5,439.5 220.5,439.5 220.5,437.5 220.5,436.5 221.5,436.5 219.5,436.5 219.5,435.5 219.5,433.5 220.5,433.5 220.5,432.5 220.5,432.5" fill="none" stroke="#a0a0a0" stroke-width="1" stroke-linejoin="round" stroke-linejoin="miter" shape-rendering="crispEdges"/>
<polyline points="49.5,522.5 48.5,522.5 48.5,520.5 50.5,520.5 50.5,519.5 50.5,519.5 50.5,517.5 50.5,516.5 51.5,516.5 51.5,514.5 52.5,514.5 53.5,514.5 53.5,513.5 55.5,513.5 55.5,512.5 55.5,510.5 56.5,510.5 56.5,510.5 56.5,509.5 56.5,509.5 57.5,509.5 59.5,509.5 59.5,509.5 60.5,509.5 60.5,509.5 60.5,510.5 62.5,510.5 62.5,511.5 62.5,511.5 61.5,511.5 61.5,513.5 60.5,513.5 60.5,514.5 58.5,514.5 58.5,515.5 58.5,516.5 57.5,516.5 56.5,516.5 56.5,517.5 55.5,517.5 55.5,518.5 54.5,518.5 54.5,519.5 54.5,521.5 53.5,521.5 53.5,523.5 54.5,523.5 54.5,523.5 52.5,523.5 52.5,523.5 50.5,523.5 49.5,523.5 49.5,522.5" fill="none" stroke="#a0a0a0" stroke-width="1" stroke-linejoin="round" stroke-linejoin="miter" shape-rendering="crispEdges"/>
<polyline points="49.5,520.5 49.5,519.5 51.5,519.5 51.5,519.5 51.5,518.5 51.5,517.5 53.5,517.5 54.5,517.5 54.5,516.5 54.5,515.5 54.5,515.5 56.5,515.5 56.5,514.5 56.5,513.5 57.5,513.5 57.5,512.5 58.5,512.5 58.5,511.5 59.5,511.5 60.5,511.5 60.5,510.5" fill="none" stroke="#999" stroke-width="1" stroke-linejoin="round" stroke-linejoin="miter" shape-rendering="crispEdges"/>
</g>
<rect x="29" y="304" width="239" height="1" fill="#242424"/>
<rect x="29" y="546" width="239" height="1" fill="#242424"/>
<rect x="29" y="304" width="1" height="243" fill="#242424"/>
<rect x="267" y="304" width="1" height="243" fill="#242424"/>
<line x1="192.5" y1="457.5" x2="145.5" y2="439.5" stroke="#ff8c40" stroke-width="1" shape-rendering="crispEdges"/>
<line x1="138.5" y1="438.5" x2="149.5" y2="438.5" stroke="#ff8c40" stroke-width="1" shape-rendering="crispEdges"/>
<line x1="138.5" y1="438.5" x2="147.5" y2="444.5" stroke="#ff8c40" stroke-width="1" shape-rendering="crispEdges"/>
<line x1="141.5" y1="438.5" x2="145.5" y2="441.5" stroke="#ff8c40" stroke-width="1" shape-rendering="crispEdges"/>
<path d="M63.0,358.5h7M66.5,355.0v7" stroke="#5f9ea0" stroke-width="1"/>
<text x="66.3" y="350.8" font-size="8.8" fill="#aaa" text-anchor="middle" textLength="8.4" lengthAdjust="spacingAndGlyphs" >03</text>
<path d="M119.0,399.5h7M122.5,396.0v7" stroke="#777" stroke-width="1"/>
<text x="122.2" y="391.40000000000003" font-size="8.8" fill="#aaa" text-anchor="middle" textLength="8.4" lengthAdjust="spacingAndGlyphs" >02</text>
<path d="M210.0,428.5h7M213.5,425.0v7" stroke="#777" stroke-width="1"/>
<text x="213.4" y="420.3" font-size="8.8" fill="#aaa" text-anchor="middle" textLength="8.4" lengthAdjust="spacingAndGlyphs" >08</text>
<path d="M158.0,452.5h7M161.5,449.0v7" stroke="#9966cc" stroke-width="1"/>
<text x="161.1" y="444.6" font-size="8.8" fill="#aaa" text-anchor="middle" textLength="8.4" lengthAdjust="spacingAndGlyphs" >04</text>
<text x="74.2" y="555.5" font-size="10.5" fill="#d4d4d4" text-anchor="middle" textLength="15.299999999999999" lengthAdjust="spacingAndGlyphs" >-86</text>
<text x="145.6" y="555.5" font-size="10.5" fill="#d4d4d4" text-anchor="middle" textLength="15.299999999999999" lengthAdjust="spacingAndGlyphs" >-85</text>
<text x="216.7" y="555.5" font-size="10.5" fill="#d4d4d4" text-anchor="middle" textLength="15.299999999999999" lengthAdjust="spacingAndGlyphs" >-84</text>
<text x="0" y="0" font-size="10.5" fill="#d4d4d4" text-anchor="middle" transform="translate(28.3,385.8) rotate(-90)" textLength="10.2" lengthAdjust="spacingAndGlyphs" >35</text>
<text x="0" y="0" font-size="10.5" fill="#d4d4d4" text-anchor="middle" transform="translate(28.3,473.4) rotate(-90)" textLength="10.2" lengthAdjust="spacingAndGlyphs" >34</text>
<text x="148" y="569.3" font-size="14" fill="#eeeeee" text-anchor="middle" textLength="104.2" lengthAdjust="spacingAndGlyphs" >Longitude [deg]</text>
<text x="0" y="0" font-size="14" fill="#eeeeee" text-anchor="middle" transform="translate(16.3,426.8) rotate(-90)" textLength="97.4" lengthAdjust="spacingAndGlyphs" >Latitude [deg]</text>
<g clip-path="url(#orbclip)">
<polyline points="546.2,439.9 546.0,447.1 545.4,454.2 544.5,461.3 543.2,468.3 541.5,475.3 539.4,482.2 537.0,488.9 534.2,495.5 531.1,502.0 527.6,508.3 523.9,514.4 519.7,520.3 515.3,526.0 510.6,531.4 505.6,536.6 500.4,541.6 494.9,546.2 489.1,550.6 483.1,554.6 476.9,558.4 470.6,561.8 464.0,564.9 457.3,567.6 450.5,570.0 443.5,572.0 436.5,573.7 429.4,575.0 422.2,576.0 414.9,576.5 407.7,576.7 400.5,576.5 393.2,576.0 386.0,575.0 378.9,573.7 371.9,572.0 364.9,570.0 358.1,567.6 351.4,564.9 344.8,561.8 338.5,558.4 332.3,554.6 326.3,550.6 320.5,546.2 315.0,541.6 309.8,536.6 304.8,531.4 300.1,526.0 295.7,520.3 291.5,514.4 287.8,508.3 284.3,502.0 281.2,495.5 278.4,488.9 276.0,482.2 273.9,475.3 272.2,468.3 270.9,461.3 270.0,454.2 269.4,447.1 269.2,439.9 269.4,432.7 270.0,425.6 270.9,418.5 272.2,411.5 273.9,404.5 276.0,397.6 278.4,390.9 281.2,384.3 284.3,377.8 287.8,371.5 291.5,365.4 295.7,359.5 300.1,353.8 304.8,348.4 309.8,343.2 315.0,338.2 320.5,333.6 326.3,329.2 332.3,325.2 338.4,321.4 344.8,318.0 351.4,314.9 358.1,312.2 364.9,309.8 371.9,307.8 378.9,306.1 386.0,304.8 393.2,303.8 400.5,303.3 407.7,303.1 414.9,303.3 422.2,303.8 429.4,304.8 436.5,306.1 443.5,307.8 450.5,309.8 457.3,312.2 464.0,314.9 470.6,318.0 476.9,321.4 483.1,325.2 489.1,329.2 494.9,333.6 500.4,338.2 505.6,343.2 510.6,348.4 515.3,353.8 519.7,359.5 523.9,365.4 527.6,371.5 531.1,377.8 534.2,384.3 537.0,390.9 539.4,397.6 541.5,404.5 543.2,411.5 544.5,418.5 545.4,425.6 546.0,432.7 546.2,439.9" fill="none" stroke="#86864f" stroke-width="1" stroke-linejoin="round" shape-rendering="crispEdges"/>
<polyline points="424.7,440.4 424.2,443.6 422.7,446.4 420.4,448.7 417.5,450.1 414.3,450.6 411.1,450.1 408.2,448.7 405.9,446.4 404.4,443.6 403.9,440.4 404.4,437.2 405.9,434.4 408.2,432.1 411.1,430.7 414.3,430.2 417.5,430.7 420.4,432.1 422.7,434.4 424.2,437.2 424.7,440.4" fill="none" stroke="#86864f" stroke-width="1" stroke-linejoin="round" shape-rendering="crispEdges"/>
<polyline points="433.3,438.6 432.8,442.7 431.5,446.5 429.3,450.0 426.4,452.9 422.9,455.1 419.1,456.4 415.0,456.9 410.9,456.4 407.1,455.1 403.6,452.9 400.7,450.0 398.5,446.5 397.2,442.7 396.7,438.6 397.2,434.5 398.5,430.7 400.7,427.2 403.6,424.3 407.1,422.1 410.9,420.8 415.0,420.3 419.1,420.8 422.9,422.1 426.4,424.3 429.3,427.2 431.5,430.7 432.8,434.5 433.3,438.6" fill="none" stroke="#86864f" stroke-width="1" stroke-linejoin="round" shape-rendering="crispEdges"/>
<polyline points="440.6,439.3 440.2,443.8 439.0,448.2 437.1,452.3 434.5,456.0 431.3,459.2 427.6,461.8 423.5,463.7 419.1,464.9 414.6,465.3 410.1,464.9 405.7,463.7 401.6,461.8 397.9,459.2 394.7,456.0 392.1,452.3 390.2,448.2 389.0,443.8 388.6,439.3 389.0,434.8 390.2,430.4 392.1,426.3 394.7,422.6 397.9,419.4 401.6,416.8 405.7,414.9 410.1,413.7 414.6,413.3 419.1,413.7 423.5,414.9 427.6,416.8 431.3,419.4 434.5,422.6 437.1,426.3 439.0,430.4 440.2,434.8 440.6,439.3" fill="none" stroke="#86864f" stroke-width="1" stroke-linejoin="round" shape-rendering="crispEdges"/>
<polyline points="451.8,438.1 451.4,443.3 450.4,448.5 448.7,453.4 446.4,458.1 443.5,462.5 440.0,466.4 436.1,469.8 431.8,472.7 427.1,475.1 422.1,476.7 417.0,477.8 411.8,478.1 406.5,477.8 401.4,476.7 396.4,475.1 391.8,472.7 387.4,469.8 383.5,466.4 380.0,462.5 377.1,458.1 374.8,453.4 373.1,448.5 372.1,443.3 371.8,438.1 372.1,432.9 373.1,427.7 374.8,422.8 377.1,418.1 380.0,413.7 383.5,409.8 387.4,406.4 391.8,403.5 396.4,401.1 401.4,399.5 406.5,398.4 411.8,398.1 417.0,398.4 422.1,399.5 427.1,401.1 431.8,403.5 436.1,406.4 440.0,409.8 443.5,413.7 446.4,418.1 448.7,422.8 450.4,427.7 451.4,432.9 451.8,438.1" fill="none" stroke="#86864f" stroke-width="1" stroke-linejoin="round" shape-rendering="crispEdges"/>
<polyline points="319.2,557.0 320.7,551.7 322.8,544.1 325.3,535.3 328.0,526.5 330.9,518.6 334.0,511.6 337.6,504.8 341.2,498.3 344.7,492.4 347.9,487.0 350.6,482.5 353.0,478.6 355.3,475.2 357.6,472.0 360.0,468.8 362.6,465.5 365.2,462.4 367.8,459.4 370.6,456.4 373.4,453.5 376.3,450.5 379.2,447.6 382.2,444.7 385.3,441.9 388.6,439.2 392.2,436.6 396.1,434.0 400.1,431.5 404.1,429.4 407.7,427.7 411.0,426.5 414.1,425.7 417.1,425.2 420.0,425.0 423.0,424.9 426.0,424.9 429.0,425.1 432.0,425.5 435.1,426.2 438.3,427.4 441.7,429.1 445.2,431.3 448.8,433.9 452.3,436.5 455.5,439.2 458.6,442.0 461.6,445.1 464.4,448.2 466.9,451.1 468.9,453.5 470.2,454.9 470.8,455.6 471.2,456.2 471.9,457.5 473.3,460.3 475.6,465.0 478.6,470.9 481.9,477.7 485.1,484.9 487.9,491.9 490.2,499.0 492.4,506.5 494.4,514.1 496.1,521.5 497.6,528.4 498.8,535.1 499.7,541.8 500.4,548.0 500.9,553.2 501.3,557.0" fill="none" stroke="#4e9ea6" stroke-width="1" stroke-linejoin="round" shape-rendering="crispEdges"/>
<circle cx="414.4" cy="438.25" r="3.6" fill="#ffee00"/>
<circle cx="406.4" cy="435.4" r="2.4" fill="#8a8a70"/>
<circle cx="398.2" cy="446.5" r="2.4" fill="#8a8a70"/>
<circle cx="439.3" cy="409.6" r="2.4" fill="#8a8a70"/>
<circle cx="438.3" cy="427.4" r="2.6" fill="#1177ff"/>
</g>
<rect x="280" y="304" width="264" height="1" fill="#242424"/>
<rect x="280" y="557" width="264" height="1" fill="#242424"/>
<rect x="280" y="304" width="1" height="254" fill="#242424"/>
<rect x="543" y="304" width="1" height="254" fill="#242424"/>
<text x="543" y="315.6" font-size="13.33" fill="#eeeeee" text-anchor="end" >T_j -0.09</text>
<text x="413.85" y="570.2" font-size="14" fill="#eeeeee" text-anchor="middle" textLength="147" lengthAdjust="spacingAndGlyphs" >Orbital Position [AU]</text>
<rect x="601" y="303" width="1" height="105" fill="#242424"/>
<rect x="641" y="303" width="1" height="105" fill="#242424"/>
<rect x="682" y="303" width="1" height="105" fill="#242424"/>
<rect x="722" y="303" width="1" height="105" fill="#242424"/>
<rect x="762" y="303" width="1" height="105" fill="#242424"/>
<rect x="803" y="303" width="1" height="105" fill="#242424"/>
<rect x="843" y="303" width="1" height="105" fill="#242424"/>
<rect x="883" y="303" width="1" height="105" fill="#242424"/>
<rect x="923" y="303" width="1" height="105" fill="#242424"/>
<rect x="964" y="303" width="1" height="105" fill="#242424"/>
<rect x="1004" y="303" width="1" height="105" fill="#242424"/>
<rect x="582" y="310" width="439" height="1" fill="#242424"/>
<rect x="586" y="319" width="435" height="1" fill="#242424"/>
<rect x="586" y="328" width="435" height="1" fill="#242424"/>
<rect x="586" y="346" width="435" height="1" fill="#242424"/>
<rect x="586" y="356" width="435" height="1" fill="#242424"/>
<rect x="582" y="365" width="439" height="1" fill="#242424"/>
<rect x="586" y="375" width="435" height="1" fill="#242424"/>
<rect x="586" y="384" width="435" height="1" fill="#242424"/>
<rect x="582" y="393" width="439" height="1" fill="#242424"/>
<rect x="586" y="303" width="435" height="1" fill="#242424"/>
<rect x="586" y="403" width="435" height="1" fill="#242424"/>
<rect x="586" y="303" width="1" height="101" fill="#242424"/>
<rect x="1020" y="303" width="1" height="101" fill="#242424"/>
<text x="601.5" y="418.3" font-size="10.5" fill="#d4d4d4" text-anchor="middle" textLength="10.2" lengthAdjust="spacingAndGlyphs" >-0</text>
<text x="641.5" y="418.3" font-size="10.5" fill="#d4d4d4" text-anchor="middle" textLength="5.1" lengthAdjust="spacingAndGlyphs" >8</text>
<text x="682.5" y="418.3" font-size="10.5" fill="#d4d4d4" text-anchor="middle" textLength="10.2" lengthAdjust="spacingAndGlyphs" >16</text>
<text x="722.5" y="418.3" font-size="10.5" fill="#d4d4d4" text-anchor="middle" textLength="10.2" lengthAdjust="spacingAndGlyphs" >23</text>
<text x="762.5" y="418.3" font-size="10.5" fill="#d4d4d4" text-anchor="middle" textLength="10.2" lengthAdjust="spacingAndGlyphs" >31</text>
<text x="803.5" y="418.3" font-size="10.5" fill="#d4d4d4" text-anchor="middle" textLength="10.2" lengthAdjust="spacingAndGlyphs" >39</text>
<text x="843.5" y="418.3" font-size="10.5" fill="#d4d4d4" text-anchor="middle" textLength="10.2" lengthAdjust="spacingAndGlyphs" >47</text>
<text x="883.5" y="418.3" font-size="10.5" fill="#d4d4d4" text-anchor="middle" textLength="10.2" lengthAdjust="spacingAndGlyphs" >55</text>
<text x="923.5" y="418.3" font-size="10.5" fill="#d4d4d4" text-anchor="middle" textLength="10.2" lengthAdjust="spacingAndGlyphs" >62</text>
<text x="964.5" y="418.3" font-size="10.5" fill="#d4d4d4" text-anchor="middle" textLength="10.2" lengthAdjust="spacingAndGlyphs" >70</text>
<text x="1004.5" y="418.3" font-size="10.5" fill="#d4d4d4" text-anchor="middle" textLength="10.2" lengthAdjust="spacingAndGlyphs" >78</text>
<text x="0" y="0" font-size="10.5" fill="#d4d4d4" text-anchor="middle" transform="translate(581.2,310.5) rotate(-90)" textLength="15.299999999999999" lengthAdjust="spacingAndGlyphs" >0.7</text>
<text x="0" y="0" font-size="10.5" fill="#d4d4d4" text-anchor="middle" transform="translate(581.2,337.5) rotate(-90)" textLength="15.299999999999999" lengthAdjust="spacingAndGlyphs" >0.0</text>
<text x="0" y="0" font-size="10.5" fill="#d4d4d4" text-anchor="middle" transform="translate(581.2,365.5) rotate(-90)" textLength="20.4" lengthAdjust="spacingAndGlyphs" >-0.7</text>
<text x="0" y="0" font-size="10.5" fill="#d4d4d4" text-anchor="middle" transform="translate(581.2,393.5) rotate(-90)" textLength="20.4" lengthAdjust="spacingAndGlyphs" >-1.4</text>
<text x="803" y="431.7" font-size="14" fill="#eeeeee" text-anchor="middle" textLength="160" lengthAdjust="spacingAndGlyphs" >Length Along Trail [km]</text>
<text x="0" y="0" font-size="14" fill="#eeeeee" text-anchor="middle" transform="translate(568.2,353) rotate(-90)" textLength="89.05" lengthAdjust="spacingAndGlyphs" >Horz Res [km]</text>
<rect x="586" y="337" width="435" height="1" fill="#eeeeee"/>
<rect x="599" y="318" width="5" height="5" fill="#9966cc"/>
<rect x="610" y="325" width="5" height="5" fill="#9966cc"/>
<rect x="619" y="330" width="5" height="5" fill="#9966cc"/>
<rect x="633" y="327" width="5" height="5" fill="#9966cc"/>
<rect x="646" y="332" width="5" height="5" fill="#9966cc"/>
<rect x="658" y="326" width="5" height="5" fill="#9966cc"/>
<rect x="669" y="333" width="5" height="5" fill="#9966cc"/>
<rect x="681" y="331" width="5" height="5" fill="#9966cc"/>
<rect x="691" y="336" width="5" height="5" fill="#9966cc"/>
<rect x="703" y="333" width="5" height="5" fill="#9966cc"/>
<rect x="713" y="327" width="5" height="5" fill="#9966cc"/>
<rect x="726" y="331" width="5" height="5" fill="#9966cc"/>
<rect x="737" y="325" width="5" height="5" fill="#9966cc"/>
<rect x="749" y="346" width="5" height="5" fill="#9966cc"/>
<rect x="760" y="320" width="5" height="5" fill="#9966cc"/>
<rect x="770" y="337" width="5" height="5" fill="#9966cc"/>
<rect x="783" y="316" width="5" height="5" fill="#9966cc"/>
<rect x="792" y="315" width="5" height="5" fill="#9966cc"/>
<rect x="806" y="324" width="5" height="5" fill="#9966cc"/>
<rect x="815" y="313" width="5" height="5" fill="#9966cc"/>
<rect x="826" y="329" width="5" height="5" fill="#9966cc"/>
<rect x="839" y="321" width="5" height="5" fill="#9966cc"/>
<rect x="847" y="322" width="5" height="5" fill="#9966cc"/>
<rect x="861" y="316" width="5" height="5" fill="#9966cc"/>
<rect x="869" y="327" width="5" height="5" fill="#9966cc"/>
<rect x="885" y="326" width="5" height="5" fill="#9966cc"/>
<rect x="891" y="317" width="5" height="5" fill="#9966cc"/>
<rect x="908" y="319" width="5" height="5" fill="#9966cc"/>
<rect x="913" y="314" width="5" height="5" fill="#9966cc"/>
<rect x="929" y="328" width="5" height="5" fill="#9966cc"/>
<rect x="942" y="325" width="5" height="5" fill="#9966cc"/>
<rect x="952" y="324" width="5" height="5" fill="#9966cc"/>
<rect x="961" y="324" width="5" height="5" fill="#9966cc"/>
<rect x="972" y="327" width="5" height="5" fill="#9966cc"/>
<rect x="982" y="339" width="5" height="5" fill="#9966cc"/>
<rect x="991" y="343" width="5" height="5" fill="#9966cc"/>
<rect x="1002" y="336" width="5" height="5" fill="#9966cc"/>
<rect x="705" y="352" width="5" height="5" fill="#ffbb00"/>
<rect x="720" y="367" width="5" height="5" fill="#ffbb00"/>
<rect x="739" y="343" width="5" height="5" fill="#ffbb00"/>
<rect x="743" y="346" width="5" height="5" fill="#ffbb00"/>
<rect x="742" y="347" width="5" height="5" fill="#ffbb00"/>
<rect x="752" y="364" width="5" height="5" fill="#ffbb00"/>
<rect x="767" y="349" width="5" height="5" fill="#ffbb00"/>
<rect x="777" y="347" width="5" height="5" fill="#ffbb00"/>
<rect x="798" y="343" width="5" height="5" fill="#ffbb00"/>
<rect x="800" y="344" width="5" height="5" fill="#ffbb00"/>
<rect x="812" y="357" width="5" height="5" fill="#ffbb00"/>
<rect x="829" y="340" width="5" height="5" fill="#ffbb00"/>
<rect x="830" y="342" width="5" height="5" fill="#ffbb00"/>
<rect x="851" y="339" width="5" height="5" fill="#ffbb00"/>
<rect x="862" y="350" width="5" height="5" fill="#ffbb00"/>
<rect x="872" y="330" width="5" height="5" fill="#ffbb00"/>
<rect x="873" y="331" width="5" height="5" fill="#ffbb00"/>
<rect x="886" y="341" width="5" height="5" fill="#ffbb00"/>
<rect x="889" y="342" width="5" height="5" fill="#ffbb00"/>
<rect x="906" y="338" width="5" height="5" fill="#ffbb00"/>
<rect x="934" y="345" width="5" height="5" fill="#ffbb00"/>
<rect x="939" y="328" width="5" height="5" fill="#ffbb00"/>
<rect x="943" y="348" width="5" height="5" fill="#ffbb00"/>
<rect x="965" y="346" width="5" height="5" fill="#ffbb00"/>
<rect x="964" y="357" width="5" height="5" fill="#ffbb00"/>
<rect x="975" y="331" width="5" height="5" fill="#ffbb00"/>
<rect x="986" y="338" width="5" height="5" fill="#ffbb00"/>
<rect x="763" y="398" width="5" height="5" fill="#5f9ea0"/>
<rect x="782" y="367" width="5" height="5" fill="#5f9ea0"/>
<rect x="783" y="334" width="5" height="5" fill="#5f9ea0"/>
<rect x="791" y="376" width="5" height="5" fill="#5f9ea0"/>
<rect x="816" y="354" width="5" height="5" fill="#5f9ea0"/>
<rect x="817" y="366" width="5" height="5" fill="#5f9ea0"/>
<rect x="829" y="362" width="5" height="5" fill="#5f9ea0"/>
<rect x="843" y="357" width="5" height="5" fill="#5f9ea0"/>
<rect x="851" y="367" width="5" height="5" fill="#5f9ea0"/>
<rect x="862" y="355" width="5" height="5" fill="#5f9ea0"/>
<rect x="873" y="364" width="5" height="5" fill="#5f9ea0"/>
<rect x="889" y="369" width="5" height="5" fill="#5f9ea0"/>
<rect x="899" y="378" width="5" height="5" fill="#5f9ea0"/>
<rect x="915" y="329" width="5" height="5" fill="#5f9ea0"/>
<rect x="928" y="340" width="5" height="5" fill="#5f9ea0"/>
<rect x="931" y="362" width="5" height="5" fill="#5f9ea0"/>
<rect x="946" y="359" width="5" height="5" fill="#5f9ea0"/>
<rect x="960" y="358" width="5" height="5" fill="#5f9ea0"/>
<rect x="962" y="352" width="5" height="5" fill="#5f9ea0"/>
<rect x="696" y="354" width="5" height="5" fill="#11dd55"/>
<rect x="704" y="306" width="5" height="5" fill="#11dd55"/>
<rect x="713" y="331" width="5" height="5" fill="#11dd55"/>
<rect x="724" y="309" width="5" height="5" fill="#11dd55"/>
<rect x="739" y="319" width="5" height="5" fill="#11dd55"/>
<rect x="750" y="330" width="5" height="5" fill="#11dd55"/>
<rect x="760" y="324" width="5" height="5" fill="#11dd55"/>
<rect x="770" y="334" width="5" height="5" fill="#11dd55"/>
<rect x="782" y="332" width="5" height="5" fill="#11dd55"/>
<rect x="795" y="318" width="5" height="5" fill="#11dd55"/>
<rect x="804" y="318" width="5" height="5" fill="#11dd55"/>
<rect x="817" y="320" width="5" height="5" fill="#11dd55"/>
<rect x="831" y="321" width="5" height="5" fill="#11dd55"/>
<rect x="840" y="313" width="5" height="5" fill="#11dd55"/>
<rect x="853" y="325" width="5" height="5" fill="#11dd55"/>
<rect x="861" y="313" width="5" height="5" fill="#11dd55"/>
<rect x="876" y="324" width="5" height="5" fill="#11dd55"/>
<rect x="885" y="314" width="5" height="5" fill="#11dd55"/>
<rect x="898" y="316" width="5" height="5" fill="#11dd55"/>
<rect x="912" y="321" width="5" height="5" fill="#11dd55"/>
<rect x="923" y="314" width="5" height="5" fill="#11dd55"/>
<rect x="932" y="319" width="5" height="5" fill="#11dd55"/>
<rect x="940" y="305" width="5" height="5" fill="#11dd55"/>
<rect x="951" y="316" width="5" height="5" fill="#11dd55"/>
<rect x="966" y="312" width="5" height="5" fill="#11dd55"/>
<rect x="975" y="316" width="5" height="5" fill="#11dd55"/>
<rect x="601" y="323" width="1" height="15" fill="#5e3f80"/>
<rect x="612" y="330" width="1" height="8" fill="#5e3f80"/>
<rect x="621" y="335" width="1" height="3" fill="#5e3f80"/>
<rect x="635" y="332" width="1" height="6" fill="#5e3f80"/>
<rect x="648" y="338" width="1" height="0" fill="#5e3f80"/>
<rect x="660" y="331" width="1" height="7" fill="#5e3f80"/>
<rect x="671" y="338" width="1" height="0" fill="#5e3f80"/>
<rect x="683" y="337" width="1" height="1" fill="#5e3f80"/>
<rect x="693" y="337" width="1" height="-1" fill="#5e3f80"/>
<rect x="705" y="338" width="1" height="0" fill="#5e3f80"/>
<rect x="715" y="333" width="1" height="5" fill="#5e3f80"/>
<rect x="728" y="336" width="1" height="2" fill="#5e3f80"/>
<rect x="739" y="330" width="1" height="8" fill="#5e3f80"/>
<rect x="751" y="337" width="1" height="9" fill="#5e3f80"/>
<rect x="762" y="325" width="1" height="13" fill="#5e3f80"/>
<rect x="772" y="337" width="1" height="1" fill="#5e3f80"/>
<rect x="785" y="321" width="1" height="17" fill="#5e3f80"/>
<rect x="794" y="320" width="1" height="18" fill="#5e3f80"/>
<rect x="808" y="329" width="1" height="9" fill="#5e3f80"/>
<rect x="817" y="318" width="1" height="20" fill="#5e3f80"/>
<rect x="828" y="334" width="1" height="4" fill="#5e3f80"/>
<rect x="841" y="326" width="1" height="12" fill="#5e3f80"/>
<rect x="849" y="327" width="1" height="11" fill="#5e3f80"/>
<rect x="863" y="321" width="1" height="17" fill="#5e3f80"/>
<rect x="871" y="332" width="1" height="6" fill="#5e3f80"/>
<rect x="887" y="331" width="1" height="7" fill="#5e3f80"/>
<rect x="893" y="322" width="1" height="16" fill="#5e3f80"/>
<rect x="910" y="324" width="1" height="14" fill="#5e3f80"/>
<rect x="915" y="319" width="1" height="19" fill="#5e3f80"/>
<rect x="931" y="333" width="1" height="5" fill="#5e3f80"/>
<rect x="944" y="330" width="1" height="8" fill="#5e3f80"/>
<rect x="954" y="329" width="1" height="9" fill="#5e3f80"/>
<rect x="963" y="329" width="1" height="9" fill="#5e3f80"/>
<rect x="974" y="332" width="1" height="6" fill="#5e3f80"/>
<rect x="984" y="337" width="1" height="2" fill="#5e3f80"/>
<rect x="993" y="337" width="1" height="6" fill="#5e3f80"/>
<rect x="1004" y="337" width="1" height="-1" fill="#5e3f80"/>
<rect x="707" y="337" width="1" height="15" fill="#9a7010"/>
<rect x="722" y="337" width="1" height="30" fill="#9a7010"/>
<rect x="741" y="337" width="1" height="6" fill="#9a7010"/>
<rect x="745" y="337" width="1" height="9" fill="#9a7010"/>
<rect x="744" y="337" width="1" height="10" fill="#9a7010"/>
<rect x="754" y="337" width="1" height="27" fill="#9a7010"/>
<rect x="769" y="337" width="1" height="12" fill="#9a7010"/>
<rect x="779" y="337" width="1" height="10" fill="#9a7010"/>
<rect x="800" y="337" width="1" height="6" fill="#9a7010"/>
<rect x="802" y="337" width="1" height="7" fill="#9a7010"/>
<rect x="814" y="337" width="1" height="20" fill="#9a7010"/>
<rect x="831" y="337" width="1" height="3" fill="#9a7010"/>
<rect x="832" y="337" width="1" height="5" fill="#9a7010"/>
<rect x="853" y="337" width="1" height="2" fill="#9a7010"/>
<rect x="864" y="337" width="1" height="13" fill="#9a7010"/>
<rect x="874" y="335" width="1" height="3" fill="#9a7010"/>
<rect x="875" y="337" width="1" height="1" fill="#9a7010"/>
<rect x="888" y="337" width="1" height="4" fill="#9a7010"/>
<rect x="891" y="337" width="1" height="5" fill="#9a7010"/>
<rect x="908" y="337" width="1" height="1" fill="#9a7010"/>
<rect x="936" y="337" width="1" height="8" fill="#9a7010"/>
<rect x="941" y="333" width="1" height="5" fill="#9a7010"/>
<rect x="945" y="337" width="1" height="11" fill="#9a7010"/>
<rect x="967" y="337" width="1" height="9" fill="#9a7010"/>
<rect x="966" y="337" width="1" height="20" fill="#9a7010"/>
<rect x="977" y="336" width="1" height="2" fill="#9a7010"/>
<rect x="988" y="337" width="1" height="1" fill="#9a7010"/>
<rect x="765" y="337" width="1" height="61" fill="#3d6668"/>
<rect x="784" y="337" width="1" height="30" fill="#3d6668"/>
<rect x="785" y="339" width="1" height="-1" fill="#3d6668"/>
<rect x="793" y="337" width="1" height="39" fill="#3d6668"/>
<rect x="818" y="337" width="1" height="17" fill="#3d6668"/>
<rect x="819" y="337" width="1" height="29" fill="#3d6668"/>
<rect x="831" y="337" width="1" height="25" fill="#3d6668"/>
<rect x="845" y="337" width="1" height="20" fill="#3d6668"/>
<rect x="853" y="337" width="1" height="30" fill="#3d6668"/>
<rect x="864" y="337" width="1" height="18" fill="#3d6668"/>
<rect x="875" y="337" width="1" height="27" fill="#3d6668"/>
<rect x="891" y="337" width="1" height="32" fill="#3d6668"/>
<rect x="901" y="337" width="1" height="41" fill="#3d6668"/>
<rect x="917" y="334" width="1" height="4" fill="#3d6668"/>
<rect x="930" y="337" width="1" height="3" fill="#3d6668"/>
<rect x="933" y="337" width="1" height="25" fill="#3d6668"/>
<rect x="948" y="337" width="1" height="22" fill="#3d6668"/>
<rect x="962" y="337" width="1" height="21" fill="#3d6668"/>
<rect x="964" y="337" width="1" height="15" fill="#3d6668"/>
<rect x="698" y="337" width="1" height="17" fill="#0b7a33"/>
<rect x="706" y="311" width="1" height="27" fill="#0b7a33"/>
<rect x="715" y="336" width="1" height="2" fill="#0b7a33"/>
<rect x="726" y="314" width="1" height="24" fill="#0b7a33"/>
<rect x="741" y="325" width="1" height="13" fill="#0b7a33"/>
<rect x="752" y="335" width="1" height="3" fill="#0b7a33"/>
<rect x="762" y="329" width="1" height="9" fill="#0b7a33"/>
<rect x="772" y="339" width="1" height="-1" fill="#0b7a33"/>
<rect x="784" y="337" width="1" height="1" fill="#0b7a33"/>
<rect x="797" y="323" width="1" height="15" fill="#0b7a33"/>
<rect x="806" y="323" width="1" height="15" fill="#0b7a33"/>
<rect x="819" y="325" width="1" height="13" fill="#0b7a33"/>
<rect x="833" y="326" width="1" height="12" fill="#0b7a33"/>
<rect x="842" y="319" width="1" height="19" fill="#0b7a33"/>
<rect x="855" y="330" width="1" height="8" fill="#0b7a33"/>
<rect x="863" y="319" width="1" height="19" fill="#0b7a33"/>
<rect x="878" y="329" width="1" height="9" fill="#0b7a33"/>
<rect x="887" y="319" width="1" height="19" fill="#0b7a33"/>
<rect x="900" y="321" width="1" height="17" fill="#0b7a33"/>
<rect x="914" y="326" width="1" height="12" fill="#0b7a33"/>
<rect x="925" y="319" width="1" height="19" fill="#0b7a33"/>
<rect x="934" y="324" width="1" height="14" fill="#0b7a33"/>
<rect x="942" y="310" width="1" height="28" fill="#0b7a33"/>
<rect x="953" y="321" width="1" height="17" fill="#0b7a33"/>
<rect x="968" y="317" width="1" height="21" fill="#0b7a33"/>
<rect x="977" y="321" width="1" height="17" fill="#0b7a33"/>
<rect x="601" y="441" width="1" height="105" fill="#242424"/>
<rect x="641" y="441" width="1" height="105" fill="#242424"/>
<rect x="682" y="441" width="1" height="105" fill="#242424"/>
<rect x="722" y="441" width="1" height="105" fill="#242424"/>
<rect x="762" y="441" width="1" height="105" fill="#242424"/>
<rect x="803" y="441" width="1" height="105" fill="#242424"/>
<rect x="843" y="441" width="1" height="105" fill="#242424"/>
<rect x="883" y="441" width="1" height="105" fill="#242424"/>
<rect x="923" y="441" width="1" height="105" fill="#242424"/>
<rect x="964" y="441" width="1" height="105" fill="#242424"/>
<rect x="1004" y="441" width="1" height="105" fill="#242424"/>
<rect x="582" y="451" width="439" height="1" fill="#242424"/>
<rect x="586" y="460" width="435" height="1" fill="#242424"/>
<rect x="586" y="470" width="435" height="1" fill="#242424"/>
<rect x="582" y="479" width="439" height="1" fill="#242424"/>
<rect x="586" y="488" width="435" height="1" fill="#242424"/>
<rect x="586" y="498" width="435" height="1" fill="#242424"/>
<rect x="586" y="516" width="435" height="1" fill="#242424"/>
<rect x="586" y="525" width="435" height="1" fill="#242424"/>
<rect x="582" y="534" width="439" height="1" fill="#242424"/>
<rect x="586" y="441" width="435" height="1" fill="#242424"/>
<rect x="586" y="541" width="435" height="1" fill="#242424"/>
<rect x="586" y="441" width="1" height="101" fill="#242424"/>
<rect x="1020" y="441" width="1" height="101" fill="#242424"/>
<text x="601.5" y="556.3" font-size="10.5" fill="#d4d4d4" text-anchor="middle" textLength="10.2" lengthAdjust="spacingAndGlyphs" >-0</text>
<text x="641.5" y="556.3" font-size="10.5" fill="#d4d4d4" text-anchor="middle" textLength="5.1" lengthAdjust="spacingAndGlyphs" >8</text>
<text x="682.5" y="556.3" font-size="10.5" fill="#d4d4d4" text-anchor="middle" textLength="10.2" lengthAdjust="spacingAndGlyphs" >16</text>
<text x="722.5" y="556.3" font-size="10.5" fill="#d4d4d4" text-anchor="middle" textLength="10.2" lengthAdjust="spacingAndGlyphs" >23</text>
<text x="762.5" y="556.3" font-size="10.5" fill="#d4d4d4" text-anchor="middle" textLength="10.2" lengthAdjust="spacingAndGlyphs" >31</text>
<text x="803.5" y="556.3" font-size="10.5" fill="#d4d4d4" text-anchor="middle" textLength="10.2" lengthAdjust="spacingAndGlyphs" >39</text>
<text x="843.5" y="556.3" font-size="10.5" fill="#d4d4d4" text-anchor="middle" textLength="10.2" lengthAdjust="spacingAndGlyphs" >47</text>
<text x="883.5" y="556.3" font-size="10.5" fill="#d4d4d4" text-anchor="middle" textLength="10.2" lengthAdjust="spacingAndGlyphs" >55</text>
<text x="923.5" y="556.3" font-size="10.5" fill="#d4d4d4" text-anchor="middle" textLength="10.2" lengthAdjust="spacingAndGlyphs" >62</text>
<text x="964.5" y="556.3" font-size="10.5" fill="#d4d4d4" text-anchor="middle" textLength="10.2" lengthAdjust="spacingAndGlyphs" >70</text>
<text x="1004.5" y="556.3" font-size="10.5" fill="#d4d4d4" text-anchor="middle" textLength="10.2" lengthAdjust="spacingAndGlyphs" >78</text>
<text x="0" y="0" font-size="10.5" fill="#d4d4d4" text-anchor="middle" transform="translate(581.2,451.5) rotate(-90)" textLength="15.299999999999999" lengthAdjust="spacingAndGlyphs" >1.5</text>
<text x="0" y="0" font-size="10.5" fill="#d4d4d4" text-anchor="middle" transform="translate(581.2,479.5) rotate(-90)" textLength="15.299999999999999" lengthAdjust="spacingAndGlyphs" >0.7</text>
<text x="0" y="0" font-size="10.5" fill="#d4d4d4" text-anchor="middle" transform="translate(581.2,507.5) rotate(-90)" textLength="15.299999999999999" lengthAdjust="spacingAndGlyphs" >0.0</text>
<text x="0" y="0" font-size="10.5" fill="#d4d4d4" text-anchor="middle" transform="translate(581.2,534.5) rotate(-90)" textLength="20.4" lengthAdjust="spacingAndGlyphs" >-0.7</text>
<text x="803" y="569.7" font-size="14" fill="#eeeeee" text-anchor="middle" textLength="160" lengthAdjust="spacingAndGlyphs" >Length Along Trail [km]</text>
<text x="0" y="0" font-size="14" fill="#eeeeee" text-anchor="middle" transform="translate(568.2,491.4) rotate(-90)" textLength="89.05" lengthAdjust="spacingAndGlyphs" >Vert Res [km]</text>
<rect x="586" y="507" width="435" height="1" fill="#eeeeee"/>
<rect x="599" y="503" width="5" height="5" fill="#9966cc"/>
<rect x="610" y="504" width="5" height="5" fill="#9966cc"/>
<rect x="619" y="504" width="5" height="5" fill="#9966cc"/>
<rect x="633" y="504" width="5" height="5" fill="#9966cc"/>
<rect x="646" y="504" width="5" height="5" fill="#9966cc"/>
<rect x="658" y="504" width="5" height="5" fill="#9966cc"/>
<rect x="669" y="504" width="5" height="5" fill="#9966cc"/>
<rect x="681" y="504" width="5" height="5" fill="#9966cc"/>
<rect x="691" y="505" width="5" height="5" fill="#9966cc"/>
<rect x="703" y="504" width="5" height="5" fill="#9966cc"/>
<rect x="713" y="504" width="5" height="5" fill="#9966cc"/>
<rect x="726" y="504" width="5" height="5" fill="#9966cc"/>
<rect x="737" y="504" width="5" height="5" fill="#9966cc"/>
<rect x="749" y="505" width="5" height="5" fill="#9966cc"/>
<rect x="760" y="504" width="5" height="5" fill="#9966cc"/>
<rect x="770" y="505" width="5" height="5" fill="#9966cc"/>
<rect x="783" y="503" width="5" height="5" fill="#9966cc"/>
<rect x="792" y="503" width="5" height="5" fill="#9966cc"/>
<rect x="806" y="504" width="5" height="5" fill="#9966cc"/>
<rect x="815" y="503" width="5" height="5" fill="#9966cc"/>
<rect x="826" y="504" width="5" height="5" fill="#9966cc"/>
<rect x="839" y="504" width="5" height="5" fill="#9966cc"/>
<rect x="847" y="504" width="5" height="5" fill="#9966cc"/>
<rect x="861" y="503" width="5" height="5" fill="#9966cc"/>
<rect x="869" y="504" width="5" height="5" fill="#9966cc"/>
<rect x="885" y="504" width="5" height="5" fill="#9966cc"/>
<rect x="891" y="503" width="5" height="5" fill="#9966cc"/>
<rect x="908" y="503" width="5" height="5" fill="#9966cc"/>
<rect x="913" y="503" width="5" height="5" fill="#9966cc"/>
<rect x="929" y="504" width="5" height="5" fill="#9966cc"/>
<rect x="942" y="504" width="5" height="5" fill="#9966cc"/>
<rect x="952" y="504" width="5" height="5" fill="#9966cc"/>
<rect x="961" y="504" width="5" height="5" fill="#9966cc"/>
<rect x="972" y="504" width="5" height="5" fill="#9966cc"/>
<rect x="982" y="505" width="5" height="5" fill="#9966cc"/>
<rect x="991" y="505" width="5" height="5" fill="#9966cc"/>
<rect x="1002" y="505" width="5" height="5" fill="#9966cc"/>
<rect x="705" y="511" width="5" height="5" fill="#ffbb00"/>
<rect x="720" y="517" width="5" height="5" fill="#ffbb00"/>
<rect x="739" y="507" width="5" height="5" fill="#ffbb00"/>
<rect x="743" y="508" width="5" height="5" fill="#ffbb00"/>
<rect x="752" y="515" width="5" height="5" fill="#ffbb00"/>
<rect x="767" y="510" width="5" height="5" fill="#ffbb00"/>
<rect x="777" y="509" width="5" height="5" fill="#ffbb00"/>
<rect x="798" y="507" width="5" height="5" fill="#ffbb00"/>
<rect x="800" y="508" width="5" height="5" fill="#ffbb00"/>
<rect x="812" y="513" width="5" height="5" fill="#ffbb00"/>
<rect x="829" y="506" width="5" height="5" fill="#ffbb00"/>
<rect x="830" y="507" width="5" height="5" fill="#ffbb00"/>
<rect x="851" y="506" width="5" height="5" fill="#ffbb00"/>
<rect x="862" y="510" width="5" height="5" fill="#ffbb00"/>
<rect x="871" y="502" width="5" height="5" fill="#ffbb00"/>
<rect x="874" y="503" width="5" height="5" fill="#ffbb00"/>
<rect x="886" y="507" width="5" height="5" fill="#ffbb00"/>
<rect x="889" y="507" width="5" height="5" fill="#ffbb00"/>
<rect x="906" y="505" width="5" height="5" fill="#ffbb00"/>
<rect x="934" y="508" width="5" height="5" fill="#ffbb00"/>
<rect x="939" y="502" width="5" height="5" fill="#ffbb00"/>
<rect x="943" y="509" width="5" height="5" fill="#ffbb00"/>
<rect x="965" y="509" width="5" height="5" fill="#ffbb00"/>
<rect x="964" y="513" width="5" height="5" fill="#ffbb00"/>
<rect x="975" y="503" width="5" height="5" fill="#ffbb00"/>
<rect x="986" y="506" width="5" height="5" fill="#ffbb00"/>
<rect x="763" y="443" width="5" height="5" fill="#5f9ea0"/>
<rect x="782" y="472" width="5" height="5" fill="#5f9ea0"/>
<rect x="791" y="464" width="5" height="5" fill="#5f9ea0"/>
<rect x="817" y="474" width="5" height="5" fill="#5f9ea0"/>
<rect x="816" y="486" width="5" height="5" fill="#5f9ea0"/>
<rect x="829" y="478" width="5" height="5" fill="#5f9ea0"/>
<rect x="843" y="483" width="5" height="5" fill="#5f9ea0"/>
<rect x="851" y="473" width="5" height="5" fill="#5f9ea0"/>
<rect x="862" y="484" width="5" height="5" fill="#5f9ea0"/>
<rect x="873" y="475" width="5" height="5" fill="#5f9ea0"/>
<rect x="889" y="471" width="5" height="5" fill="#5f9ea0"/>
<rect x="899" y="462" width="5" height="5" fill="#5f9ea0"/>
<rect x="915" y="511" width="5" height="5" fill="#5f9ea0"/>
<rect x="928" y="500" width="5" height="5" fill="#5f9ea0"/>
<rect x="931" y="477" width="5" height="5" fill="#5f9ea0"/>
<rect x="946" y="480" width="5" height="5" fill="#5f9ea0"/>
<rect x="960" y="482" width="5" height="5" fill="#5f9ea0"/>
<rect x="962" y="487" width="5" height="5" fill="#5f9ea0"/>
<rect x="696" y="486" width="5" height="5" fill="#11dd55"/>
<rect x="704" y="535" width="5" height="5" fill="#11dd55"/>
<rect x="713" y="509" width="5" height="5" fill="#11dd55"/>
<rect x="724" y="532" width="5" height="5" fill="#11dd55"/>
<rect x="739" y="522" width="5" height="5" fill="#11dd55"/>
<rect x="750" y="510" width="5" height="5" fill="#11dd55"/>
<rect x="760" y="516" width="5" height="5" fill="#11dd55"/>
<rect x="770" y="506" width="5" height="5" fill="#11dd55"/>
<rect x="782" y="508" width="5" height="5" fill="#11dd55"/>
<rect x="795" y="522" width="5" height="5" fill="#11dd55"/>
<rect x="804" y="522" width="5" height="5" fill="#11dd55"/>
<rect x="817" y="521" width="5" height="5" fill="#11dd55"/>
<rect x="831" y="520" width="5" height="5" fill="#11dd55"/>
<rect x="840" y="528" width="5" height="5" fill="#11dd55"/>
<rect x="853" y="515" width="5" height="5" fill="#11dd55"/>
<rect x="861" y="527" width="5" height="5" fill="#11dd55"/>
<rect x="876" y="516" width="5" height="5" fill="#11dd55"/>
<rect x="885" y="526" width="5" height="5" fill="#11dd55"/>
<rect x="898" y="525" width="5" height="5" fill="#11dd55"/>
<rect x="912" y="519" width="5" height="5" fill="#11dd55"/>
<rect x="923" y="526" width="5" height="5" fill="#11dd55"/>
<rect x="932" y="522" width="5" height="5" fill="#11dd55"/>
<rect x="940" y="536" width="5" height="5" fill="#11dd55"/>
<rect x="951" y="525" width="5" height="5" fill="#11dd55"/>
<rect x="966" y="529" width="5" height="5" fill="#11dd55"/>
<rect x="975" y="525" width="5" height="5" fill="#11dd55"/>
<rect x="601" y="508" width="1" height="0" fill="#5e3f80"/>
<rect x="612" y="509" width="1" height="-1" fill="#5e3f80"/>
<rect x="621" y="509" width="1" height="-1" fill="#5e3f80"/>
<rect x="635" y="509" width="1" height="-1" fill="#5e3f80"/>
<rect x="648" y="509" width="1" height="-1" fill="#5e3f80"/>
<rect x="660" y="509" width="1" height="-1" fill="#5e3f80"/>
<rect x="671" y="509" width="1" height="-1" fill="#5e3f80"/>
<rect x="683" y="509" width="1" height="-1" fill="#5e3f80"/>
<rect x="693" y="507" width="1" height="-2" fill="#5e3f80"/>
<rect x="705" y="509" width="1" height="-1" fill="#5e3f80"/>
<rect x="715" y="509" width="1" height="-1" fill="#5e3f80"/>
<rect x="728" y="509" width="1" height="-1" fill="#5e3f80"/>
<rect x="739" y="509" width="1" height="-1" fill="#5e3f80"/>
<rect x="751" y="507" width="1" height="-2" fill="#5e3f80"/>
<rect x="762" y="509" width="1" height="-1" fill="#5e3f80"/>
<rect x="772" y="507" width="1" height="-2" fill="#5e3f80"/>
<rect x="785" y="508" width="1" height="0" fill="#5e3f80"/>
<rect x="794" y="508" width="1" height="0" fill="#5e3f80"/>
<rect x="808" y="509" width="1" height="-1" fill="#5e3f80"/>
<rect x="817" y="508" width="1" height="0" fill="#5e3f80"/>
<rect x="828" y="509" width="1" height="-1" fill="#5e3f80"/>
<rect x="841" y="509" width="1" height="-1" fill="#5e3f80"/>
<rect x="849" y="509" width="1" height="-1" fill="#5e3f80"/>
<rect x="863" y="508" width="1" height="0" fill="#5e3f80"/>
<rect x="871" y="509" width="1" height="-1" fill="#5e3f80"/>
<rect x="887" y="509" width="1" height="-1" fill="#5e3f80"/>
<rect x="893" y="508" width="1" height="0" fill="#5e3f80"/>
<rect x="910" y="508" width="1" height="0" fill="#5e3f80"/>
<rect x="915" y="508" width="1" height="0" fill="#5e3f80"/>
<rect x="931" y="509" width="1" height="-1" fill="#5e3f80"/>
<rect x="944" y="509" width="1" height="-1" fill="#5e3f80"/>
<rect x="954" y="509" width="1" height="-1" fill="#5e3f80"/>
<rect x="963" y="509" width="1" height="-1" fill="#5e3f80"/>
<rect x="974" y="509" width="1" height="-1" fill="#5e3f80"/>
<rect x="984" y="507" width="1" height="-2" fill="#5e3f80"/>
<rect x="993" y="507" width="1" height="-2" fill="#5e3f80"/>
<rect x="1004" y="507" width="1" height="-2" fill="#5e3f80"/>
<rect x="707" y="507" width="1" height="4" fill="#9a7010"/>
<rect x="722" y="507" width="1" height="10" fill="#9a7010"/>
<rect x="741" y="507" width="1" height="1" fill="#9a7010"/>
<rect x="745" y="507" width="1" height="1" fill="#9a7010"/>
<rect x="754" y="507" width="1" height="9" fill="#9a7010"/>
<rect x="769" y="507" width="1" height="3" fill="#9a7010"/>
<rect x="779" y="507" width="1" height="2" fill="#9a7010"/>
<rect x="800" y="507" width="1" height="0" fill="#9a7010"/>
<rect x="802" y="507" width="1" height="1" fill="#9a7010"/>
<rect x="814" y="507" width="1" height="6" fill="#9a7010"/>
<rect x="831" y="507" width="1" height="-1" fill="#9a7010"/>
<rect x="832" y="507" width="1" height="0" fill="#9a7010"/>
<rect x="853" y="507" width="1" height="-1" fill="#9a7010"/>
<rect x="864" y="507" width="1" height="3" fill="#9a7010"/>
<rect x="873" y="507" width="1" height="1" fill="#9a7010"/>
<rect x="876" y="508" width="1" height="0" fill="#9a7010"/>
<rect x="888" y="507" width="1" height="0" fill="#9a7010"/>
<rect x="891" y="507" width="1" height="0" fill="#9a7010"/>
<rect x="908" y="507" width="1" height="-2" fill="#9a7010"/>
<rect x="936" y="507" width="1" height="1" fill="#9a7010"/>
<rect x="941" y="507" width="1" height="1" fill="#9a7010"/>
<rect x="945" y="507" width="1" height="2" fill="#9a7010"/>
<rect x="967" y="507" width="1" height="2" fill="#9a7010"/>
<rect x="966" y="507" width="1" height="6" fill="#9a7010"/>
<rect x="977" y="508" width="1" height="0" fill="#9a7010"/>
<rect x="988" y="507" width="1" height="-1" fill="#9a7010"/>
<rect x="765" y="448" width="1" height="60" fill="#3d6668"/>
<rect x="784" y="477" width="1" height="31" fill="#3d6668"/>
<rect x="793" y="469" width="1" height="39" fill="#3d6668"/>
<rect x="819" y="479" width="1" height="29" fill="#3d6668"/>
<rect x="818" y="491" width="1" height="17" fill="#3d6668"/>
<rect x="831" y="483" width="1" height="25" fill="#3d6668"/>
<rect x="845" y="488" width="1" height="20" fill="#3d6668"/>
<rect x="853" y="479" width="1" height="29" fill="#3d6668"/>
<rect x="864" y="489" width="1" height="19" fill="#3d6668"/>
<rect x="875" y="480" width="1" height="28" fill="#3d6668"/>
<rect x="891" y="476" width="1" height="32" fill="#3d6668"/>
<rect x="901" y="467" width="1" height="41" fill="#3d6668"/>
<rect x="917" y="507" width="1" height="4" fill="#3d6668"/>
<rect x="930" y="505" width="1" height="3" fill="#3d6668"/>
<rect x="933" y="482" width="1" height="26" fill="#3d6668"/>
<rect x="948" y="485" width="1" height="23" fill="#3d6668"/>
<rect x="962" y="487" width="1" height="21" fill="#3d6668"/>
<rect x="964" y="492" width="1" height="16" fill="#3d6668"/>
<rect x="698" y="491" width="1" height="17" fill="#0b7a33"/>
<rect x="706" y="507" width="1" height="28" fill="#0b7a33"/>
<rect x="715" y="507" width="1" height="2" fill="#0b7a33"/>
<rect x="726" y="507" width="1" height="25" fill="#0b7a33"/>
<rect x="741" y="507" width="1" height="15" fill="#0b7a33"/>
<rect x="752" y="507" width="1" height="3" fill="#0b7a33"/>
<rect x="762" y="507" width="1" height="9" fill="#0b7a33"/>
<rect x="772" y="507" width="1" height="-1" fill="#0b7a33"/>
<rect x="784" y="507" width="1" height="1" fill="#0b7a33"/>
<rect x="797" y="507" width="1" height="15" fill="#0b7a33"/>
<rect x="806" y="507" width="1" height="15" fill="#0b7a33"/>
<rect x="819" y="507" width="1" height="15" fill="#0b7a33"/>
<rect x="833" y="507" width="1" height="13" fill="#0b7a33"/>
<rect x="842" y="507" width="1" height="21" fill="#0b7a33"/>
<rect x="855" y="507" width="1" height="9" fill="#0b7a33"/>
<rect x="863" y="507" width="1" height="21" fill="#0b7a33"/>
<rect x="878" y="507" width="1" height="9" fill="#0b7a33"/>
<rect x="887" y="507" width="1" height="19" fill="#0b7a33"/>
<rect x="900" y="507" width="1" height="18" fill="#0b7a33"/>
<rect x="914" y="507" width="1" height="12" fill="#0b7a33"/>
<rect x="925" y="507" width="1" height="19" fill="#0b7a33"/>
<rect x="934" y="507" width="1" height="15" fill="#0b7a33"/>
<rect x="942" y="507" width="1" height="29" fill="#0b7a33"/>
<rect x="953" y="507" width="1" height="18" fill="#0b7a33"/>
<rect x="968" y="507" width="1" height="23" fill="#0b7a33"/>
<rect x="977" y="507" width="1" height="18" fill="#0b7a33"/>
</svg></div></body></html>
